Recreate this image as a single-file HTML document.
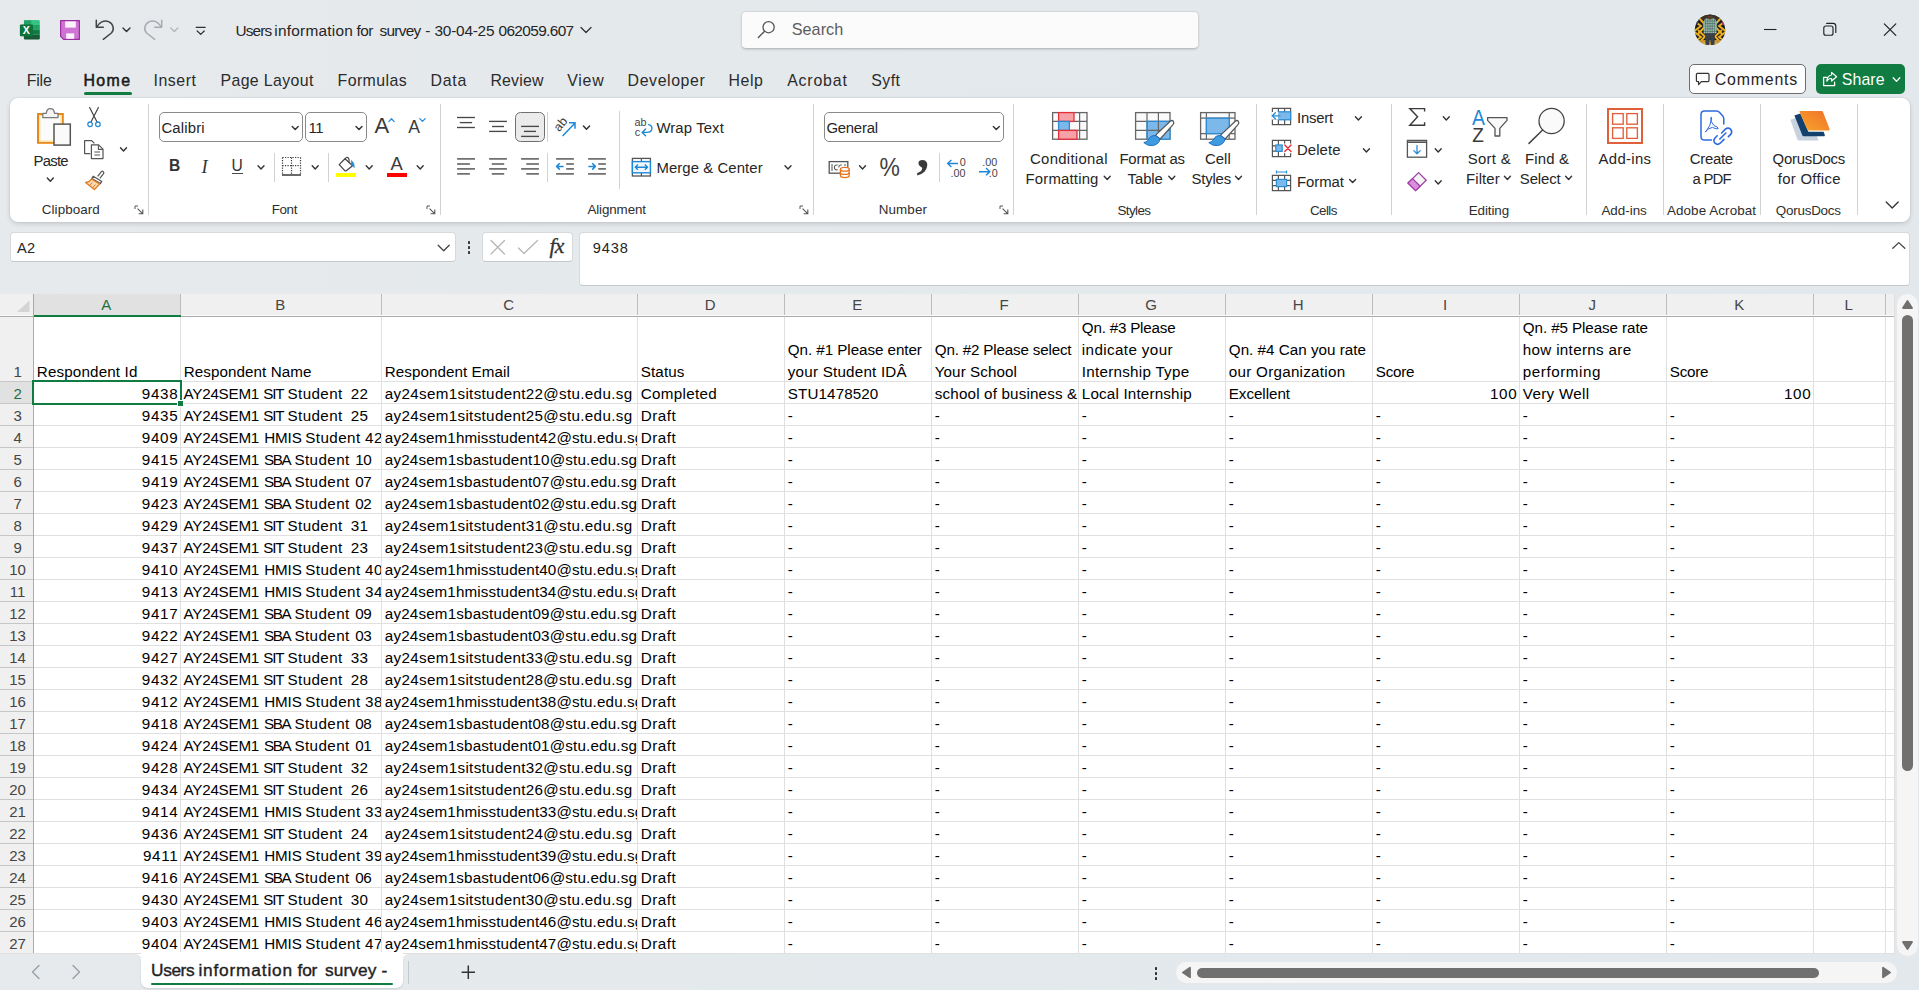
<!DOCTYPE html>
<html lang="en"><head><meta charset="utf-8"><title>Users information for survey - Excel</title>
<style>
html,body{margin:0;padding:0;}
body{width:1919px;height:990px;overflow:hidden;background:#e4e9ec;font-family:"Liberation Sans",sans-serif;position:relative;}
#app{position:absolute;left:0;top:0;width:1919px;height:990px;overflow:hidden;background:linear-gradient(90deg,#e7eaed 0%,#e4e9ec 40%,#e2e8ec 100%);}
.t{position:absolute;white-space:pre;}
.cell{position:absolute;overflow:hidden;white-space:pre;}
</style></head><body><div id="app">
<svg style="position:absolute;left:19px;top:19px;" width="22" height="22" viewBox="0 0 22 22">
<defs><clipPath id="xl"><rect x="4.7" y="1.1" width="16.2" height="19.6" rx="1.4"/></clipPath></defs>
<g clip-path="url(#xl)">
<rect x="4.7" y="1.1" width="8.1" height="4.9" fill="#21a366"/><rect x="12.8" y="1.1" width="8.1" height="4.9" fill="#33c481"/>
<rect x="4.7" y="6" width="8.1" height="4.9" fill="#107c41"/><rect x="12.8" y="6" width="8.1" height="4.9" fill="#21a366"/>
<rect x="4.7" y="10.9" width="8.1" height="4.9" fill="#185c37"/><rect x="12.8" y="10.9" width="8.1" height="4.9" fill="#107c41"/>
<rect x="4.7" y="15.8" width="16.2" height="4.9" fill="#185c37"/>
</g>
<rect x="0.9" y="5.4" width="13.1" height="11.8" rx="1.2" fill="#107c41"/>
<rect x="0.9" y="5.4" width="13.1" height="11.8" rx="1.2" fill="#0b6433" opacity=".35"/>
<text x="7.4" y="15.2" font-family="Liberation Sans, sans-serif" font-weight="bold" font-size="10.6" fill="#fff" text-anchor="middle">X</text>
</svg>
<svg style="position:absolute;left:59px;top:19px;" width="22" height="22" viewBox="0 0 22 22">
<path d="M1.6 1.6 H20.4 V20.4 H4.6 L1.6 17.4 Z" fill="#cf74d4" stroke="#9a2fa0" stroke-width="1.2" stroke-linejoin="round"/>
<rect x="6.2" y="2.4" width="10.6" height="6.2" fill="#fcf2fc"/>
<rect x="7.2" y="14.4" width="8" height="5.4" fill="#fcf2fc"/>
</svg>
<svg style="position:absolute;left:94.2px;top:17.2px;" width="22" height="24" viewBox="0 0 22 24">
<path d="M2.3 3.2 V10.2 H9.3" fill="none" stroke="#444" stroke-width="1.5" stroke-linecap="round" stroke-linejoin="round"/>
<path d="M2.8 9.8 C5 5.5 10 2.6 14.6 4.6 C19.6 6.8 20.6 12.6 17.4 16 L9.3 22.3" fill="none" stroke="#444" stroke-width="1.5" stroke-linecap="round" stroke-linejoin="round"/>
</svg>
<svg style="position:absolute;left:0;top:0;overflow:visible" width="1" height="1"><path d="M123.00 27.90 L126.50 31.50 L130.00 27.90" fill="none" stroke="#333" stroke-width="1.4" stroke-linecap="round" stroke-linejoin="round"/></svg>
<svg style="position:absolute;left:141.8px;top:17.2px;" width="22" height="24" viewBox="0 0 22 24">
<path d="M19.7 3.2 V10.2 H12.7" fill="none" stroke="#a6abaf" stroke-width="1.5" stroke-linecap="round" stroke-linejoin="round"/>
<path d="M19.2 9.8 C17 5.5 12 2.6 7.4 4.6 C2.4 6.8 1.4 12.6 4.6 16 L12.7 22.3" fill="none" stroke="#a6abaf" stroke-width="1.5" stroke-linecap="round" stroke-linejoin="round"/>
</svg>
<svg style="position:absolute;left:0;top:0;overflow:visible" width="1" height="1"><path d="M170.80 27.90 L174.30 31.50 L177.80 27.90" fill="none" stroke="#b4b9bd" stroke-width="1.4" stroke-linecap="round" stroke-linejoin="round"/></svg>
<svg style="position:absolute;left:195px;top:25px;" width="12" height="12" viewBox="0 0 12 12">
<path d="M1.2 2.3 H10.2" stroke="#333" stroke-width="1.3" stroke-linecap="round"/>
<path d="M2.2 6 L5.7 9.4 L9.2 6" fill="none" stroke="#333" stroke-width="1.3" stroke-linecap="round" stroke-linejoin="round"/>
</svg>
<span class="t " style="left:235.60px;top:20px;font-size:15.4px;line-height:22px;color:#262626;letter-spacing:-0.903px;">Users </span>
<span class="t " style="left:274.30px;top:20px;font-size:15.4px;line-height:22px;color:#262626;letter-spacing:0.238px;">information </span>
<span class="t " style="left:356.50px;top:20px;font-size:15.4px;line-height:22px;color:#262626;letter-spacing:-0.524px;">for </span>
<span class="t " style="left:379.60px;top:20px;font-size:15.4px;line-height:22px;color:#262626;letter-spacing:-0.760px;">survey </span>
<span class="t " style="left:425.20px;top:20px;font-size:15.4px;line-height:22px;color:#262626;letter-spacing:0.071px;">- </span>
<span class="t " style="left:434.50px;top:20px;font-size:15.4px;line-height:22px;color:#262626;letter-spacing:-0.231px;">30-04-25 </span>
<span class="t " style="left:498.50px;top:20px;font-size:15.4px;line-height:22px;color:#262626;letter-spacing:-0.626px;">062059.607 </span>
<svg style="position:absolute;left:0;top:0;overflow:visible" width="1" height="1"><path d="M581.00 27.50 L586.00 32.50 L591.00 27.50" fill="none" stroke="#333" stroke-width="1.3" stroke-linecap="round" stroke-linejoin="round"/></svg>
<div style="position:absolute;left:740.5px;top:10.5px;width:458.5px;height:38.5px;background:#fbfbfb;border:1px solid #d3d7da;border-bottom-color:#b9bec2;border-radius:5px;box-sizing:border-box;box-shadow:0 1px 2px rgba(0,0,0,.12);"></div>
<svg style="position:absolute;left:755px;top:18px;" width="24" height="24" viewBox="0 0 24 24">
<circle cx="13.6" cy="9.2" r="5.6" fill="none" stroke="#555" stroke-width="1.3"/>
<path d="M9.6 13.2 L3.4 19.6" stroke="#555" stroke-width="1.4" stroke-linecap="round"/>
</svg>
<span class="t " style="left:791.70px;top:18px;font-size:16.2px;line-height:23px;color:#5d5d5d;letter-spacing:0.061px;">Search </span>
<svg style="position:absolute;left:1694px;top:14px;" width="32" height="32" viewBox="0 0 32 32">
<defs><clipPath id="av"><circle cx="16" cy="15.9" r="15.2"/></clipPath></defs>
<g clip-path="url(#av)">
<rect width="32" height="32" fill="#1d1c22"/>
<rect x="0" y="0" width="32" height="6" fill="#3a3326"/>
<g stroke="#eeb01c" stroke-width="1.9" fill="none">
<path d="M-1 6 L7 12 L-1 18"/><path d="M4 3 L12 11.5 L4 20"/>
<path d="M-1 17 L7 23 L-1 29"/><path d="M4 16 L11 22.5 L4 30"/>
<path d="M33 6 L25 12 L33 18"/><path d="M28 3 L20 11.5 L28 20"/>
<path d="M33 17 L25 23 L33 29"/><path d="M28 16 L21 22.5 L28 30"/>
</g>
<rect x="0" y="1" width="4" height="9" fill="#27408a"/><rect x="28" y="5" width="4" height="6" fill="#a03a5a"/>
<path d="M0 26 L32 26 L32 32 L0 32 Z" fill="#c99634"/>
<path d="M0 28.5 L32 28.5 L32 32 L0 32 Z" fill="#e0ad45"/>
<path d="M10.6 7.2 Q10 5 12 4.4 L20 4.4 Q22 5 21.4 7.2 L22.6 19.5 L9.6 19.5 Z" fill="#a9c1b6"/>
<g stroke="#3f6a60" stroke-width=".7"><path d="M10 7 H22 M10 9.6 H22 M10 12.2 H22.4 M9.8 14.8 H22.4 M9.8 17.4 H22.6 M11.6 4.6 V19.5 M13.8 4.4 V19.5 M16 4.4 V19.5 M18.2 4.4 V19.5 M20.4 4.6 V19.5"/></g>
<path d="M9 8 L10.8 5.4 L11.4 16 L9.4 16.4 Z M23 8 L21.2 5.4 L20.6 16 L22.6 16.4 Z" fill="#8fb0a4"/>
<ellipse cx="16" cy="2.6" rx="2.6" ry="2.9" fill="#5a3d2c"/>
<path d="M13.2 1.6 Q16 -1.6 18.8 1.6 Z" fill="#1f1712"/>
<path d="M11 19.3 H21 L20.4 31 H16.8 L16 23 L15.2 31 H11.6 Z" fill="#3b4048"/>
</g></svg>
<svg style="position:absolute;left:1760px;top:19px;" width="20" height="20" viewBox="0 0 20 20"><path d="M4 10.5 H16.5" stroke="#222" stroke-width="1.1"/></svg>
<svg style="position:absolute;left:1820px;top:19px;" width="20" height="20" viewBox="0 0 20 20"><rect x="3.8" y="7" width="9.2" height="9.2" rx="2" fill="none" stroke="#222" stroke-width="1.15"/>
<path d="M6.6 4.3 H13 Q15.8 4.3 15.8 7.1 V13.4" fill="none" stroke="#222" stroke-width="1.15" stroke-linecap="round"/></svg>
<svg style="position:absolute;left:1880px;top:19px;" width="20" height="20" viewBox="0 0 20 20"><path d="M4.3 4.8 L15.8 16.3 M15.8 4.8 L4.3 16.3" stroke="#222" stroke-width="1.2" stroke-linecap="round"/></svg>
<span class="t " style="left:26.70px;top:70px;font-size:15.9px;line-height:22px;color:#2b2b2b;letter-spacing:-0.180px;">File </span>
<span class="t " style="left:153.50px;top:70px;font-size:15.9px;line-height:22px;color:#2b2b2b;letter-spacing:0.556px;">Insert </span>
<span class="t " style="left:220.50px;top:70px;font-size:15.9px;line-height:22px;color:#2b2b2b;letter-spacing:0.364px;">Page Layout </span>
<span class="t " style="left:337.50px;top:70px;font-size:15.9px;line-height:22px;color:#2b2b2b;letter-spacing:0.429px;">Formulas </span>
<span class="t " style="left:430.50px;top:70px;font-size:15.9px;line-height:22px;color:#2b2b2b;letter-spacing:0.728px;">Data </span>
<span class="t " style="left:490.40px;top:70px;font-size:15.9px;line-height:22px;color:#2b2b2b;letter-spacing:0.178px;">Review </span>
<span class="t " style="left:567.20px;top:70px;font-size:15.9px;line-height:22px;color:#2b2b2b;letter-spacing:0.756px;">View </span>
<span class="t " style="left:627.60px;top:70px;font-size:15.9px;line-height:22px;color:#2b2b2b;letter-spacing:0.591px;">Developer </span>
<span class="t " style="left:728.50px;top:70px;font-size:15.9px;line-height:22px;color:#2b2b2b;letter-spacing:0.550px;">Help </span>
<span class="t " style="left:787.20px;top:70px;font-size:15.9px;line-height:22px;color:#2b2b2b;letter-spacing:0.815px;">Acrobat </span>
<span class="t " style="left:871.20px;top:70px;font-size:15.9px;line-height:22px;color:#2b2b2b;letter-spacing:0.452px;">Syft </span>
<span class="t " style="left:83.50px;top:70px;font-size:15.9px;line-height:22px;color:#1a1a1a;letter-spacing:1.371px;-webkit-text-stroke:0.55px #1a1a1a;">Home </span>
<div style="position:absolute;left:84px;top:92px;width:48px;height:3px;background:#107c41;border-radius:1.5px;"></div>
<div style="position:absolute;left:1689px;top:64px;width:117px;height:30px;background:#fdfdfd;border:1px solid #6e6e6e;border-radius:5px;box-sizing:border-box;"></div>
<svg style="position:absolute;left:1695px;top:71.5px;" width="16" height="14" viewBox="0 0 16 14"><path d="M2.4 1.4 H13 Q14 1.4 14 2.4 V8.6 Q14 9.6 13 9.6 H6.4 L3.6 12.6 V9.6 H2.4 Q1.4 9.6 1.4 8.6 V2.4 Q1.4 1.4 2.4 1.4 Z" fill="none" stroke="#333" stroke-width="1.2" stroke-linejoin="round"/></svg>
<span class="t " style="left:1714.80px;top:69px;font-size:15.9px;line-height:22px;color:#262626;letter-spacing:0.791px;">Comments </span>
<div style="position:absolute;left:1816px;top:64px;width:89px;height:30px;background:#107c41;border-radius:5px;"></div>
<svg style="position:absolute;left:1821.5px;top:70.5px;" width="16" height="16" viewBox="0 0 16 16"><path d="M5.2 6.4 H1.6 V14.6 H12.6 V11.2" fill="none" stroke="#fff" stroke-width="1.3" stroke-linejoin="round" stroke-linecap="round"/>
<path d="M9.6 1.4 L14.6 5.7 L9.6 10 V7.5 C7.2 7.4 5.7 8.4 4.8 10.2 C5 6.8 6.8 4.5 9.6 4 Z" fill="none" stroke="#fff" stroke-width="1.2" stroke-linejoin="round"/></svg>
<span class="t " style="left:1841.80px;top:69px;font-size:15.9px;line-height:22px;color:#ffffff;letter-spacing:0.074px;">Share </span>
<svg style="position:absolute;left:0;top:0;overflow:visible" width="1" height="1"><path d="M1893.20 77.80 L1896.50 81.40 L1899.80 77.80" fill="none" stroke="#fff" stroke-width="1.3" stroke-linecap="round" stroke-linejoin="round"/></svg>
<div style="position:absolute;left:10px;top:232px;width:446px;height:30px;background:#fff;border:1px solid #d6dadd;border-bottom-color:#c4c9cd;border-radius:4px;box-sizing:border-box;"></div>
<span class="t " style="left:17.00px;top:238px;font-size:14.6px;line-height:20px;color:#262626;letter-spacing:0.271px;">A2 </span>
<svg style="position:absolute;left:0;top:0;overflow:visible" width="1" height="1"><path d="M438.20 245.25 L443.70 250.75 L449.20 245.25" fill="none" stroke="#444" stroke-width="1.3" stroke-linecap="round" stroke-linejoin="round"/></svg>
<div style="position:absolute;left:467.7px;top:241.29999999999998px;width:2.6px;height:2.6px;background:#3a3a3a;border-radius:.6px;"></div>
<div style="position:absolute;left:467.7px;top:246.29999999999998px;width:2.6px;height:2.6px;background:#3a3a3a;border-radius:.6px;"></div>
<div style="position:absolute;left:467.7px;top:251.29999999999998px;width:2.6px;height:2.6px;background:#3a3a3a;border-radius:.6px;"></div>
<div style="position:absolute;left:482px;top:232px;width:91px;height:30px;background:#fff;border:1px solid #d6dadd;border-bottom-color:#c4c9cd;border-radius:4px;box-sizing:border-box;"></div>
<svg style="position:absolute;left:488px;top:238px;" width="20" height="18" viewBox="0 0 20 18"><path d="M3 2.5 L16.5 16 M16.5 2.5 L3 16" stroke="#b4b4b4" stroke-width="1.2" stroke-linecap="round"/></svg>
<svg style="position:absolute;left:516px;top:238px;" width="24" height="18" viewBox="0 0 24 18"><path d="M2.5 10 L8 15.5 L21.5 2.5" fill="none" stroke="#b4b4b4" stroke-width="1.2" stroke-linecap="round" stroke-linejoin="round"/></svg>
<span class="t" style="left:549.5px;top:233px;font-family:'Liberation Serif',serif;font-style:italic;font-size:21.5px;line-height:26px;color:#333;letter-spacing:-0.6px;-webkit-text-stroke:0.35px #333;">fx</span>
<div style="position:absolute;left:579px;top:232px;width:1331px;height:54px;background:#fff;border:1px solid #d6dadd;border-bottom-color:#c4c9cd;border-radius:4px;box-sizing:border-box;"></div>
<span class="t " style="left:592.70px;top:238px;font-size:14.6px;line-height:20px;color:#262626;letter-spacing:0.930px;">9438 </span>
<svg style="position:absolute;left:1890px;top:240px;" width="18" height="12" viewBox="0 0 18 12"><path d="M2.8 8.3 L8.8 2.6 L14.8 8.3" fill="none" stroke="#444" stroke-width="1.3" stroke-linecap="round" stroke-linejoin="round"/></svg>
<svg style="position:absolute;left:28px;top:962px;" width="16" height="20" viewBox="0 0 16 20"><path d="M11 3.5 L4.5 10 L11 16.5" fill="none" stroke="#9aa0a5" stroke-width="1.4" stroke-linecap="round" stroke-linejoin="round"/></svg>
<svg style="position:absolute;left:68px;top:962px;" width="16" height="20" viewBox="0 0 16 20"><path d="M5 3.5 L11.5 10 L5 16.5" fill="none" stroke="#9aa0a5" stroke-width="1.4" stroke-linecap="round" stroke-linejoin="round"/></svg>
<div style="position:absolute;left:408px;top:961px;width:1px;height:23px;background:#c4c9cd;"></div>
<svg style="position:absolute;left:460px;top:964px;" width="16" height="16" viewBox="0 0 16 16"><path d="M1.6 8.2 H15 M8.3 1.5 V14.9" stroke="#333" stroke-width="1.5"/></svg>
<div style="position:absolute;left:1154.7px;top:967.3000000000001px;width:2.6px;height:2.6px;background:#333;border-radius:.6px;"></div>
<div style="position:absolute;left:1154.7px;top:972.3000000000001px;width:2.6px;height:2.6px;background:#333;border-radius:.6px;"></div>
<div style="position:absolute;left:1154.7px;top:977.3000000000001px;width:2.6px;height:2.6px;background:#333;border-radius:.6px;"></div>
<div style="position:absolute;left:1176px;top:962px;width:721px;height:21px;background:#f5f5f5;border-radius:10.5px;"></div>
<svg style="position:absolute;left:1180px;top:965px;" width="13" height="15" viewBox="0 0 13 15"><path d="M10 2.8 V12.2 L3 7.5 Z" fill="#707070" stroke="#707070" stroke-width="1.8" stroke-linejoin="round"/></svg>
<svg style="position:absolute;left:1880px;top:965px;" width="13" height="15" viewBox="0 0 13 15"><path d="M3 2.8 V12.2 L10 7.5 Z" fill="#707070" stroke="#707070" stroke-width="1.8" stroke-linejoin="round"/></svg>
<div style="position:absolute;left:1197px;top:967.5px;width:622px;height:10.8px;background:#707070;border-radius:5.4px;"></div>
<div style="position:absolute;left:1897px;top:294px;width:21px;height:662px;background:#f5f5f5;border-radius:10.5px;"></div>
<svg style="position:absolute;left:1900px;top:298px;" width="15" height="13" viewBox="0 0 15 13"><path d="M3 10 H12 L7.5 3 Z" fill="#707070" stroke="#707070" stroke-width="1.8" stroke-linejoin="round"/></svg>
<svg style="position:absolute;left:1900px;top:939px;" width="15" height="13" viewBox="0 0 15 13"><path d="M3 3 H12 L7.5 10 Z" fill="#707070" stroke="#707070" stroke-width="1.8" stroke-linejoin="round"/></svg>
<div style="position:absolute;left:1902px;top:315px;width:11px;height:456px;background:#707070;border-radius:5.5px;"></div>
<div style="position:absolute;left:10px;top:98px;width:1900px;height:124px;background:#fff;border-radius:8px;box-shadow:0 2px 5px rgba(0,0,0,.13),0 0 1.5px rgba(0,0,0,.16);"></div>
<svg style="position:absolute;left:36px;top:107px;" width="36" height="40" viewBox="0 0 36 40">
<rect x="2" y="7" width="24.8" height="28.8" fill="#fbfbfb" stroke="#e8871a" stroke-width="2"/>
<rect x="3.7" y="8.7" width="21.4" height="25.4" fill="none" stroke="#fde6a6" stroke-width="1.4"/>
<path d="M6.8 10.6 V6.4 H10.2 Q10.8 1.6 14.4 1.6 Q18 1.6 18.6 6.4 H22 V10.6 Z" fill="#f4f4f4" stroke="#7a7a7a" stroke-width="1.3" stroke-linejoin="round"/>
<rect x="18" y="17.1" width="16.3" height="21" fill="#fafafa" stroke="#555" stroke-width="1.5"/>
</svg>
<span class="t " style="left:33.60px;top:151px;font-size:14.9px;line-height:21px;color:#262626;letter-spacing:-0.780px;">Paste </span>
<svg style="position:absolute;left:0;top:0;overflow:visible" width="1" height="1"><path d="M47.30 178.00 L50.30 181.20 L53.30 178.00" fill="none" stroke="#333" stroke-width="1.4" stroke-linecap="round" stroke-linejoin="round"/></svg>
<svg style="position:absolute;left:86px;top:106px;" width="16" height="23" viewBox="0 0 16 23">
<path d="M3.6 1.6 L10.9 15.8 M12.4 1.6 L5.1 15.8" fill="none" stroke="#444" stroke-width="1.2" stroke-linecap="round"/>
<circle cx="4.1" cy="18.3" r="2.3" fill="none" stroke="#2a8dd4" stroke-width="1.3"/>
<circle cx="11.9" cy="18.3" r="2.3" fill="none" stroke="#2a8dd4" stroke-width="1.3"/>
</svg>
<svg style="position:absolute;left:83px;top:138.5px;" width="22" height="22" viewBox="0 0 22 22">
<path d="M7.4 14.6 H1.6 V1.6 H8.6 L11.4 4.4" fill="none" stroke="#555" stroke-width="1.2" stroke-linejoin="round"/>
<path d="M8.4 5.8 H15.6 L20 10.2 V19.6 H8.4 Z" fill="#fff" stroke="#555" stroke-width="1.2" stroke-linejoin="round"/>
<path d="M15.4 6 V10.4 H19.8" fill="none" stroke="#555" stroke-width="1.1"/>
<path d="M11.4 13 H17 M11.4 16 H17" stroke="#555" stroke-width="1"/>
</svg>
<svg style="position:absolute;left:0;top:0;overflow:visible" width="1" height="1"><path d="M120.50 147.70 L123.50 150.90 L126.50 147.70" fill="none" stroke="#333" stroke-width="1.4" stroke-linecap="round" stroke-linejoin="round"/></svg>
<svg style="position:absolute;left:83.5px;top:170px;" width="22" height="21" viewBox="0 0 22 21">
<path d="M13.6 6.4 L17.4 1.6 Q18.4 0.8 19.4 1.8 Q20.2 2.8 19.4 3.8 L15.8 8.4" fill="#fff" stroke="#555" stroke-width="1.2" stroke-linejoin="round"/>
<path d="M9.2 6.2 L17.8 11.4 L16.4 13.6 L7.8 8.4 Z" fill="#fff" stroke="#555" stroke-width="1.2" stroke-linejoin="round"/>
<path d="M7.4 9 L15.6 14 L10.4 19.6 L1.6 12.4 Q5.4 12.2 7.4 9 Z" fill="#fbd9b5" stroke="#e07a1a" stroke-width="1.3" stroke-linejoin="round"/>
<path d="M5.6 15.4 L8.2 12.6 M8.6 17.8 L11.4 14.6" stroke="#e07a1a" stroke-width="1"/>
</svg>
<span class="t " style="left:41.80px;top:200px;font-size:13.4px;line-height:19px;color:#2e2e2e;letter-spacing:0.071px;">Clipboard </span>
<svg style="position:absolute;left:134px;top:205px;" width="10" height="10" viewBox="0 0 10 10"><path d="M1 4 V1 H4" fill="none" stroke="#555" stroke-width="1"/><path d="M3.6 3.6 L8.6 8.6 M8.8 4.6 V8.8 H4.6" fill="none" stroke="#555" stroke-width="1.1"/></svg>
<div style="position:absolute;left:148.2px;top:104px;width:1px;height:110.5px;background:#d2d2d2;"></div>
<div style="position:absolute;left:159px;top:112px;width:143.5px;height:30px;background:#fff;border:1px solid #8a8a8a;border-radius:5px;box-sizing:border-box;"></div>
<span class="t " style="left:161.40px;top:118px;font-size:14.9px;line-height:21px;color:#262626;letter-spacing:0.167px;">Calibri </span>
<svg style="position:absolute;left:0;top:0;overflow:visible" width="1" height="1"><path d="M292.20 126.40 L295.20 129.60 L298.20 126.40" fill="none" stroke="#333" stroke-width="1.4" stroke-linecap="round" stroke-linejoin="round"/></svg>
<div style="position:absolute;left:305px;top:112px;width:61.5px;height:30px;background:#fff;border:1px solid #8a8a8a;border-radius:5px;box-sizing:border-box;"></div>
<span class="t " style="left:308.60px;top:118px;font-size:14.9px;line-height:21px;color:#262626;letter-spacing:-0.634px;">11 </span>
<svg style="position:absolute;left:0;top:0;overflow:visible" width="1" height="1"><path d="M356.00 126.40 L359.00 129.60 L362.00 126.40" fill="none" stroke="#333" stroke-width="1.4" stroke-linecap="round" stroke-linejoin="round"/></svg>
<span class="t " style="left:374.40px;top:110px;font-size:22px;line-height:31px;color:#3a3a3a;letter-spacing:0.325px;">A </span>
<svg style="position:absolute;left:386.5px;top:116.8px;" width="9" height="6" viewBox="0 0 9 6"><path d="M1.8 4.6 L4.5 1.8 L7.2 4.6" fill="none" stroke="#2a8dd4" stroke-width="1.3" stroke-linecap="round" stroke-linejoin="round"/></svg>
<span class="t " style="left:408.20px;top:115px;font-size:17.6px;line-height:25px;color:#3a3a3a;letter-spacing:0.860px;">A </span>
<svg style="position:absolute;left:418.4px;top:117.4px;" width="9" height="6" viewBox="0 0 9 6"><path d="M1.8 1.6 L4.5 4.4 L7.2 1.6" fill="none" stroke="#2a8dd4" stroke-width="1.3" stroke-linecap="round" stroke-linejoin="round"/></svg>
<span class="t " style="left:169.00px;top:155px;font-size:15.6px;line-height:22px;color:#333;letter-spacing:-1.266px;font-weight:bold;">B </span>
<span class="t" style="left:201.5px;top:156.5px;font-family:'Liberation Serif',serif;font-style:italic;font-size:18.5px;line-height:20px;color:#333;">I</span>
<span class="t " style="left:231.40px;top:155px;font-size:15.6px;line-height:22px;color:#333;letter-spacing:0.134px;">U </span>
<div style="position:absolute;left:231.8px;top:173.4px;width:11px;height:1px;background:#4a4a4a;"></div>
<svg style="position:absolute;left:0;top:0;overflow:visible" width="1" height="1"><path d="M258.00 165.70 L261.00 168.90 L264.00 165.70" fill="none" stroke="#333" stroke-width="1.4" stroke-linecap="round" stroke-linejoin="round"/></svg>
<div style="position:absolute;left:273.8px;top:152.5px;width:1px;height:29.30000000000001px;background:#d2d2d2;"></div>
<svg style="position:absolute;left:281px;top:156px;" width="21" height="21" viewBox="0 0 21 21">
<path d="M1.5 1.5 H19.5 M1.5 1.5 V18 M19.5 1.5 V18 M10.5 1.5 V18 M1.5 9.6 H19.5" fill="none" stroke="#3c3c3c" stroke-width="1.2" stroke-dasharray="1.2 1.3"/>
<path d="M1 19 H20" stroke="#444" stroke-width="1.6"/>
</svg>
<svg style="position:absolute;left:0;top:0;overflow:visible" width="1" height="1"><path d="M312.20 165.70 L315.20 168.90 L318.20 165.70" fill="none" stroke="#333" stroke-width="1.4" stroke-linecap="round" stroke-linejoin="round"/></svg>
<div style="position:absolute;left:327.8px;top:152.5px;width:1px;height:29.30000000000001px;background:#d2d2d2;"></div>
<svg style="position:absolute;left:336px;top:156px;" width="22" height="16" viewBox="0 0 22 16">
<path d="M3.2 8.6 L9 2.8 L16.6 9.8 L10.2 14.8 Q9.4 15.2 8.8 14.6 Z" fill="#fff" stroke="#444" stroke-width="1.25" stroke-linejoin="round"/>
<path d="M9 2.8 Q10.6 0.6 12.4 2 Q13.4 3 13 6.4" fill="none" stroke="#444" stroke-width="1.2" stroke-linecap="round"/>
<path d="M15.4 4.4 Q18.8 7 18.2 11.6 Q17 9.6 15.4 8.6 Z" fill="#2a8dd4" stroke="#2a8dd4" stroke-width=".7" stroke-linejoin="round"/>
</svg>
<div style="position:absolute;left:335.7px;top:172.5px;width:20px;height:4.6px;background:#ffff00;"></div>
<svg style="position:absolute;left:0;top:0;overflow:visible" width="1" height="1"><path d="M366.20 165.70 L369.20 168.90 L372.20 165.70" fill="none" stroke="#333" stroke-width="1.4" stroke-linecap="round" stroke-linejoin="round"/></svg>
<span class="t " style="left:390.40px;top:151px;font-size:18.4px;line-height:26px;color:#3a3a3a;letter-spacing:1.327px;">A </span>
<div style="position:absolute;left:386.7px;top:172.5px;width:20px;height:4.6px;background:#ff0000;"></div>
<svg style="position:absolute;left:0;top:0;overflow:visible" width="1" height="1"><path d="M417.20 165.70 L420.20 168.90 L423.20 165.70" fill="none" stroke="#333" stroke-width="1.4" stroke-linecap="round" stroke-linejoin="round"/></svg>
<span class="t " style="left:271.80px;top:200px;font-size:13.4px;line-height:19px;color:#2e2e2e;letter-spacing:-0.403px;">Font </span>
<svg style="position:absolute;left:425.7px;top:205px;" width="10" height="10" viewBox="0 0 10 10"><path d="M1 4 V1 H4" fill="none" stroke="#555" stroke-width="1"/><path d="M3.6 3.6 L8.6 8.6 M8.8 4.6 V8.8 H4.6" fill="none" stroke="#555" stroke-width="1.1"/></svg>
<div style="position:absolute;left:440.0px;top:104px;width:1px;height:110.5px;background:#d2d2d2;"></div>
<div style="position:absolute;left:515px;top:112px;width:30px;height:30px;background:#ebebeb;border:1px solid #707070;border-radius:5.5px;box-sizing:border-box;"></div>
<div style="position:absolute;left:547.0px;top:112px;width:1px;height:29.5px;background:#d2d2d2;"></div>
<div style="position:absolute;left:547.0px;top:152.5px;width:1px;height:29.0px;background:#d2d2d2;"></div>
<svg style="position:absolute;left:0;top:0;overflow:visible" width="1" height="1"><path d="M457.00 117.50 H474.90" stroke="#484848" stroke-width="1.35"/><path d="M459.80 122.60 H472.10" stroke="#484848" stroke-width="1.35"/><path d="M457.00 127.50 H474.90" stroke="#484848" stroke-width="1.35"/><path d="M489.10 121.40 H506.90" stroke="#484848" stroke-width="1.35"/><path d="M492.00 126.50 H504.00" stroke="#484848" stroke-width="1.35"/><path d="M489.10 131.40 H506.90" stroke="#484848" stroke-width="1.35"/><path d="M457.10 158.90 H475.00" stroke="#585858" stroke-width="1.5"/><path d="M457.10 164.00 H469.90" stroke="#585858" stroke-width="1.5"/><path d="M457.10 168.90 H475.00" stroke="#585858" stroke-width="1.5"/><path d="M457.10 173.90 H469.90" stroke="#585858" stroke-width="1.5"/><path d="M489.10 158.90 H506.90" stroke="#585858" stroke-width="1.5"/><path d="M491.80 164.00 H504.20" stroke="#585858" stroke-width="1.5"/><path d="M489.10 168.90 H506.90" stroke="#585858" stroke-width="1.5"/><path d="M491.80 173.90 H504.20" stroke="#585858" stroke-width="1.5"/><path d="M521.10 158.90 H538.90" stroke="#585858" stroke-width="1.5"/><path d="M526.30 164.00 H538.90" stroke="#585858" stroke-width="1.5"/><path d="M521.10 168.90 H538.90" stroke="#585858" stroke-width="1.5"/><path d="M526.30 173.90 H538.90" stroke="#585858" stroke-width="1.5"/><path d="M556.10 158.90 H573.90" stroke="#585858" stroke-width="1.5"/><path d="M556.10 173.90 H573.90" stroke="#585858" stroke-width="1.5"/><path d="M566.20 164.00 H573.90" stroke="#585858" stroke-width="1.5"/><path d="M566.20 168.90 H573.90" stroke="#585858" stroke-width="1.5"/><path d="M588.10 158.90 H605.90" stroke="#585858" stroke-width="1.5"/><path d="M588.10 173.90 H605.90" stroke="#585858" stroke-width="1.5"/><path d="M598.20 164.00 H605.90" stroke="#585858" stroke-width="1.5"/><path d="M598.20 168.90 H605.90" stroke="#585858" stroke-width="1.5"/><path d="M563.6 166.4 H556.8 M559.8 163.2 L556.6 166.4 L559.8 169.6" fill="none" stroke="#1e88d8" stroke-width="1.5" stroke-linejoin="round"/><path d="M588.4 166.4 H595.2 M592.2 163.2 L595.4 166.4 L592.2 169.6" fill="none" stroke="#1e88d8" stroke-width="1.5" stroke-linejoin="round"/></svg>
<svg style="position:absolute;left:0;top:0;overflow:visible" width="1" height="1"><path d="M521.10 126.40 H539.00" stroke="#484848" stroke-width="1.35"/><path d="M523.90 131.40 H536.00" stroke="#484848" stroke-width="1.35"/><path d="M521.10 136.40 H539.00" stroke="#484848" stroke-width="1.35"/></svg>
<svg style="position:absolute;left:553px;top:113px;" width="26" height="26" viewBox="0 0 26 26">
<g transform="translate(6.3 19.2) rotate(-51)"><text x="0" y="0" font-family="Liberation Sans, sans-serif" font-size="12.4" fill="#3c3c3c">ab</text></g>
<path d="M9.6 23 L21.6 10.6 M16 9.8 L22 9.8 L22 15.8" fill="none" stroke="#1e88d8" stroke-width="1.5" stroke-linejoin="miter"/>
</svg>
<svg style="position:absolute;left:0;top:0;overflow:visible" width="1" height="1"><path d="M583.40 125.95 L586.50 129.25 L589.60 125.95" fill="none" stroke="#333" stroke-width="1.5" stroke-linecap="round" stroke-linejoin="round"/></svg>
<div style="position:absolute;left:618.8px;top:111px;width:1px;height:77.80000000000001px;background:#d2d2d2;"></div>
<svg style="position:absolute;left:634px;top:116px;" width="20" height="22" viewBox="0 0 20 22">
<text x="0.6" y="9.8" font-family="Liberation Sans, sans-serif" font-size="10.8" fill="#444">ab</text>
<text x="0.8" y="19.6" font-family="Liberation Sans, sans-serif" font-size="10.8" fill="#444">c</text>
<path d="M14.6 8.6 Q18.6 9.6 17.8 13.4 Q17 16.4 13.2 16.4 H8.6 M11.6 13 L8.2 16.4 L11.6 19.8" fill="none" stroke="#1e88d8" stroke-width="1.4" stroke-linecap="round" stroke-linejoin="round"/>
</svg>
<span class="t " style="left:656.40px;top:118px;font-size:14.9px;line-height:21px;color:#262626;letter-spacing:0.119px;">Wrap Text </span>
<svg style="position:absolute;left:631px;top:156.5px;" width="21" height="21" viewBox="0 0 21 21">
<rect x="1.4" y="1.4" width="18" height="17.6" fill="#fff" stroke="#555" stroke-width="1.3"/>
<path d="M10.4 1.4 V4.6 M10.4 15.8 V19" stroke="#555" stroke-width="1.2"/>
<rect x="1.4" y="4.6" width="18" height="11.2" fill="#f2f8fd" stroke="#1e88d8" stroke-width="1.4"/>
<path d="M4.4 10.2 H16.4 M7 7.6 L4.2 10.2 L7 12.8 M13.8 7.6 L16.6 10.2 L13.8 12.8" fill="none" stroke="#1e88d8" stroke-width="1.4" stroke-linejoin="round"/>
</svg>
<span class="t " style="left:656.40px;top:158px;font-size:14.9px;line-height:21px;color:#262626;letter-spacing:0.087px;">Merge &amp; Center </span>
<svg style="position:absolute;left:0;top:0;overflow:visible" width="1" height="1"><path d="M785.00 165.70 L788.00 168.90 L791.00 165.70" fill="none" stroke="#333" stroke-width="1.4" stroke-linecap="round" stroke-linejoin="round"/></svg>
<span class="t " style="left:587.40px;top:200px;font-size:13.4px;line-height:19px;color:#2e2e2e;letter-spacing:-0.110px;">Alignment </span>
<svg style="position:absolute;left:798.7px;top:205px;" width="10" height="10" viewBox="0 0 10 10"><path d="M1 4 V1 H4" fill="none" stroke="#555" stroke-width="1"/><path d="M3.6 3.6 L8.6 8.6 M8.8 4.6 V8.8 H4.6" fill="none" stroke="#555" stroke-width="1.1"/></svg>
<div style="position:absolute;left:812.8px;top:104px;width:1px;height:110.5px;background:#d2d2d2;"></div>
<div style="position:absolute;left:824.3px;top:112px;width:179.5px;height:30px;background:#fff;border:1px solid #8a8a8a;border-radius:5px;box-sizing:border-box;"></div>
<span class="t " style="left:826.40px;top:118px;font-size:14.9px;line-height:21px;color:#262626;letter-spacing:-0.230px;">General </span>
<svg style="position:absolute;left:0;top:0;overflow:visible" width="1" height="1"><path d="M993.30 126.40 L996.30 129.60 L999.30 126.40" fill="none" stroke="#333" stroke-width="1.4" stroke-linecap="round" stroke-linejoin="round"/></svg>
<svg style="position:absolute;left:828px;top:159.5px;" width="23" height="19" viewBox="0 0 23 19">
<rect x="1.2" y="1.6" width="18.6" height="11.6" fill="#fff" stroke="#555" stroke-width="1.3"/>
<path d="M4 4 V11 M17 4 V6" stroke="#555" stroke-width="1"/>
<path d="M9.6 5 Q6.4 4.6 6.4 7.4 Q6.4 10.2 9.6 9.8 M13.8 5 Q10.8 4.6 10.8 7.4" fill="none" stroke="#555" stroke-width="1.1"/>
<path d="M12.4 9.2 V15.6 Q12.4 17.6 16.8 17.6 Q21.2 17.6 21.2 15.6 V9.2" fill="#fff" stroke="#e8711a" stroke-width="1.3"/>
<ellipse cx="16.8" cy="9.2" rx="4.4" ry="1.9" fill="#fff" stroke="#e8711a" stroke-width="1.3"/>
<path d="M12.4 12.4 Q12.4 14.4 16.8 14.4 Q21.2 14.4 21.2 12.4" fill="none" stroke="#e8711a" stroke-width="1.2"/>
</svg>
<svg style="position:absolute;left:0;top:0;overflow:visible" width="1" height="1"><path d="M859.50 165.70 L862.50 168.90 L865.50 165.70" fill="none" stroke="#333" stroke-width="1.4" stroke-linecap="round" stroke-linejoin="round"/></svg>
<svg style="position:absolute;left:0;top:0;overflow:visible" width="1" height="1"><text x="879.5" y="176.2" font-family="Liberation Sans, sans-serif" font-size="25.4" fill="#3f3f3f" textLength="20.4" lengthAdjust="spacingAndGlyphs">%</text><text x="916.4" y="167.3" font-family="Liberation Serif, serif" font-weight="bold" font-size="51" fill="#3a3a3a">,</text></svg>
<div style="position:absolute;left:938.8px;top:152.5px;width:1px;height:29.30000000000001px;background:#d2d2d2;"></div>
<svg style="position:absolute;left:946px;top:155.5px;" width="22" height="22" viewBox="0 0 22 22">
<path d="M12 7.5 H1.8 M5.4 3.9 L1.6 7.5 L5.4 11.1" fill="none" stroke="#1e88d8" stroke-width="1.4" stroke-linejoin="round"/>
<text x="13.7" y="9.7" font-family="Liberation Sans, sans-serif" font-size="10.8" fill="#444">0</text>
<text x="4.4" y="20.6" font-family="Liberation Sans, sans-serif" font-size="10.8" fill="#444">.00</text></svg>
<svg style="position:absolute;left:978px;top:155.5px;" width="22" height="22" viewBox="0 0 22 22">
<text x="4.2" y="9.7" font-family="Liberation Sans, sans-serif" font-size="10.8" fill="#444">.00</text>
<path d="M1 15.7 H11.6 M8 12.1 L11.8 15.7 L8 19.3" fill="none" stroke="#1e88d8" stroke-width="1.4" stroke-linejoin="round"/>
<text x="10.8" y="20.6" font-family="Liberation Sans, sans-serif" font-size="10.8" fill="#444">.0</text></svg>
<span class="t " style="left:878.80px;top:200px;font-size:13.4px;line-height:19px;color:#2e2e2e;letter-spacing:0.090px;">Number </span>
<svg style="position:absolute;left:998.8px;top:205px;" width="10" height="10" viewBox="0 0 10 10"><path d="M1 4 V1 H4" fill="none" stroke="#555" stroke-width="1"/><path d="M3.6 3.6 L8.6 8.6 M8.8 4.6 V8.8 H4.6" fill="none" stroke="#555" stroke-width="1.1"/></svg>
<div style="position:absolute;left:1012.8px;top:104px;width:1px;height:110.5px;background:#d2d2d2;"></div>
<svg style="position:absolute;left:1051px;top:111px;" width="38" height="30" viewBox="0 0 38 30">
<rect x="1.6" y="1.6" width="34.4" height="26.6" fill="#fafafa" stroke="#666" stroke-width="1.3"/>
<path d="M1.6 10.4 H36 M1.6 19.4 H36 M7.6 1.6 V28.2 M18.4 1.6 V28.2 M28.6 1.6 V28.2" stroke="#666" stroke-width="1.2"/>
<rect x="7.6" y="1.6" width="15.4" height="8.8" fill="#f8a0a8" stroke="#e0303a" stroke-width="1.3"/>
<rect x="7.6" y="10.4" width="10.8" height="9" fill="#7cb8ea" stroke="#2a8dd4" stroke-width="1.3"/>
<rect x="7.6" y="19.4" width="18.4" height="8.8" fill="#f8a0a8" stroke="#e0303a" stroke-width="1.3"/>
</svg>
<span class="t " style="left:1030.00px;top:149px;font-size:14.9px;line-height:21px;color:#262626;letter-spacing:0.295px;">Conditional </span>
<span class="t " style="left:1025.60px;top:169px;font-size:14.9px;line-height:21px;color:#262626;letter-spacing:0.179px;">Formatting </span>
<svg style="position:absolute;left:0;top:0;overflow:visible" width="1" height="1"><path d="M1104.20 176.30 L1107.20 179.50 L1110.20 176.30" fill="none" stroke="#333" stroke-width="1.4" stroke-linecap="round" stroke-linejoin="round"/></svg>
<svg style="position:absolute;left:1134px;top:111px;" width="42" height="37" viewBox="0 0 42 37">
<rect x="1.6" y="1.6" width="34.4" height="26.6" fill="#fafafa" stroke="#666" stroke-width="1.3"/>
<rect x="13" y="10.4" width="23" height="17.8" fill="#7cb8ea"/>
<path d="M1.6 10.4 H36 M1.6 19.4 H36 M13 1.6 V28.2 M24.4 1.6 V28.2" stroke="#666" stroke-width="1.2"/>
<path d="M13 10.4 H36 V28.2 H13 Z" fill="none" stroke="#2a8dd4" stroke-width="1.2"/>
<g>
<path d="M21.4 24.4 L36.2 10.2 Q38 8.8 39.3 10.2 Q40.4 11.8 39 13.6 L26.2 28 Z" fill="#fff" stroke="#555" stroke-width="1.2" stroke-linejoin="round"/>
<path d="M21.6 24.6 Q16.6 24.2 15 28 Q13.4 31.2 9.8 31.6 Q13.2 35 18.6 34.6 Q25.2 33.4 26 27.8 Z" fill="#3f9be0" stroke="#1a6fc0" stroke-width="1" stroke-linejoin="round"/>
</g></svg>
<span class="t " style="left:1119.40px;top:149px;font-size:14.9px;line-height:21px;color:#262626;letter-spacing:-0.185px;">Format as </span>
<span class="t " style="left:1127.60px;top:169px;font-size:14.9px;line-height:21px;color:#262626;letter-spacing:-0.084px;">Table </span>
<svg style="position:absolute;left:0;top:0;overflow:visible" width="1" height="1"><path d="M1168.80 176.30 L1171.80 179.50 L1174.80 176.30" fill="none" stroke="#333" stroke-width="1.4" stroke-linecap="round" stroke-linejoin="round"/></svg>
<svg style="position:absolute;left:1199px;top:111px;" width="42" height="37" viewBox="0 0 42 37">
<rect x="1.6" y="1.6" width="34.4" height="26.6" fill="#fafafa" stroke="#666" stroke-width="1.3"/>
<path d="M1.6 7.2 H36 M1.6 22.6 H36 M7.4 1.6 V28.2 M30.2 1.6 V28.2" stroke="#666" stroke-width="1.2"/>
<rect x="7.4" y="7.2" width="22.8" height="15.4" fill="#7cb8ea" stroke="#2a8dd4" stroke-width="1.3"/>
<g>
<path d="M21.4 24.4 L36.2 10.2 Q38 8.8 39.3 10.2 Q40.4 11.8 39 13.6 L26.2 28 Z" fill="#fff" stroke="#555" stroke-width="1.2" stroke-linejoin="round"/>
<path d="M21.6 24.6 Q16.6 24.2 15 28 Q13.4 31.2 9.8 31.6 Q13.2 35 18.6 34.6 Q25.2 33.4 26 27.8 Z" fill="#3f9be0" stroke="#1a6fc0" stroke-width="1" stroke-linejoin="round"/>
</g></svg>
<span class="t " style="left:1205.00px;top:149px;font-size:14.9px;line-height:21px;color:#262626;letter-spacing:0.033px;">Cell </span>
<span class="t " style="left:1191.40px;top:169px;font-size:14.9px;line-height:21px;color:#262626;letter-spacing:-0.163px;">Styles </span>
<svg style="position:absolute;left:0;top:0;overflow:visible" width="1" height="1"><path d="M1235.50 176.30 L1238.50 179.50 L1241.50 176.30" fill="none" stroke="#333" stroke-width="1.4" stroke-linecap="round" stroke-linejoin="round"/></svg>
<span class="t " style="left:1117.40px;top:201px;font-size:13.4px;line-height:19px;color:#2e2e2e;letter-spacing:-0.582px;">Styles </span>
<div style="position:absolute;left:1255.8px;top:104px;width:1px;height:110.5px;background:#d2d2d2;"></div>
<svg style="position:absolute;left:1271px;top:106.5px;" width="22" height="20" viewBox="0 0 22 20"><path d="M1.4 1.4 H19.6 V17.6 H1.4 Z M1.4 6.8 H19.6 M1.4 12.2 H19.6 M7.4 1.4 V17.6 M13.6 1.4 V17.6" fill="none" stroke="#555" stroke-width="1.2"/>
<rect x="7.4" y="4.8" width="12.2" height="8" fill="#7cb8ea" stroke="#2a8dd4" stroke-width="1.2"/>
<rect x="0.4" y="5" width="7" height="7.6" fill="#fff"/>
<path d="M9 8.8 H1.4 M4.4 5.8 L1.2 8.8 L4.4 11.8" fill="none" stroke="#2a8dd4" stroke-width="1.3" stroke-linecap="round" stroke-linejoin="round"/></svg>
<span class="t " style="left:1297.00px;top:108px;font-size:14.9px;line-height:21px;color:#262626;letter-spacing:-0.244px;">Insert </span>
<svg style="position:absolute;left:0;top:0;overflow:visible" width="1" height="1"><path d="M1355.40 116.80 L1358.40 120.00 L1361.40 116.80" fill="none" stroke="#333" stroke-width="1.4" stroke-linecap="round" stroke-linejoin="round"/></svg>
<svg style="position:absolute;left:1271px;top:139px;" width="22" height="20" viewBox="0 0 22 20"><path d="M1.4 1.4 H19.6 V17.6 H1.4 Z M1.4 6.8 H19.6 M1.4 12.2 H19.6 M7.4 1.4 V17.6 M13.6 1.4 V17.6" fill="none" stroke="#555" stroke-width="1.2"/>
<rect x="11" y="4.6" width="10.6" height="9.6" fill="#fff"/>
<rect x="4.8" y="6" width="6.4" height="6.4" fill="#7cb8ea" stroke="#2a8dd4" stroke-width="1.2"/>
<path d="M13.8 6 L20 12.4 M20 6 L13.8 12.4" stroke="#e8303a" stroke-width="1.4" stroke-linecap="round"/></svg>
<span class="t " style="left:1297.00px;top:140px;font-size:14.9px;line-height:21px;color:#262626;letter-spacing:0.088px;">Delete </span>
<svg style="position:absolute;left:0;top:0;overflow:visible" width="1" height="1"><path d="M1363.40 148.80 L1366.40 152.00 L1369.40 148.80" fill="none" stroke="#333" stroke-width="1.4" stroke-linecap="round" stroke-linejoin="round"/></svg>
<svg style="position:absolute;left:1271px;top:170px;" width="22" height="22" viewBox="0 0 22 22">
<path d="M1.4 5.4 H19.6 V20.6 H1.4 Z M1.4 10.4 H19.6 M1.4 15.6 H19.6 M7.4 5.4 V20.6 M13.6 5.4 V20.6" fill="none" stroke="#555" stroke-width="1.2"/>
<rect x="5.4" y="9.4" width="10.2" height="7.2" fill="#7cb8ea" stroke="#2a8dd4" stroke-width="1.2"/>
<path d="M5.4 2 H15.6 M5.4 0.4 V3.6 M15.6 0.4 V3.6" stroke="#2a8dd4" stroke-width="1.1"/>
</svg>
<span class="t " style="left:1297.00px;top:172px;font-size:14.9px;line-height:21px;color:#262626;letter-spacing:-0.065px;">Format </span>
<svg style="position:absolute;left:0;top:0;overflow:visible" width="1" height="1"><path d="M1349.60 179.40 L1352.60 182.60 L1355.60 179.40" fill="none" stroke="#333" stroke-width="1.4" stroke-linecap="round" stroke-linejoin="round"/></svg>
<span class="t " style="left:1310.00px;top:201px;font-size:13.4px;line-height:19px;color:#2e2e2e;letter-spacing:-0.597px;">Cells </span>
<div style="position:absolute;left:1391.1px;top:104px;width:1px;height:110.5px;background:#d2d2d2;"></div>
<svg style="position:absolute;left:1408px;top:107px;" width="19" height="20" viewBox="0 0 19 20"><path d="M16.6 4.6 V1.6 H1.8 L9.6 9.8 L1.8 18.2 H16.6 V15.2" fill="none" stroke="#3a3a3a" stroke-width="1.4" stroke-linejoin="miter"/></svg>
<svg style="position:absolute;left:0;top:0;overflow:visible" width="1" height="1"><path d="M1443.30 116.80 L1446.30 120.00 L1449.30 116.80" fill="none" stroke="#333" stroke-width="1.4" stroke-linecap="round" stroke-linejoin="round"/></svg>
<svg style="position:absolute;left:1406px;top:139px;" width="22" height="20" viewBox="0 0 22 20">
<rect x="1.4" y="1.4" width="19.2" height="16.8" fill="#fff" stroke="#555" stroke-width="1.3"/>
<path d="M1.4 3.2 H20.6" stroke="#555" stroke-width="1.6"/>
<path d="M11 6.4 V14.6 M7.8 11.6 L11 14.8 L14.2 11.6" fill="none" stroke="#2a8dd4" stroke-width="1.3" stroke-linecap="round" stroke-linejoin="round"/>
</svg>
<svg style="position:absolute;left:0;top:0;overflow:visible" width="1" height="1"><path d="M1435.20 148.80 L1438.20 152.00 L1441.20 148.80" fill="none" stroke="#333" stroke-width="1.4" stroke-linecap="round" stroke-linejoin="round"/></svg>
<svg style="position:absolute;left:1406px;top:170.5px;" width="22" height="21" viewBox="0 0 22 21">
<path d="M12.6 1.6 L20.2 9.2 L9.6 19.6 L2 12 Z" fill="#f4f4f4" stroke="#a03fa8" stroke-width="1.3" stroke-linejoin="round"/>
<path d="M6.6 7.6 L14.2 15.2 L9.6 19.6 L2 12 Z" fill="#d98fdd" stroke="#a03fa8" stroke-width="1.3" stroke-linejoin="round"/>
</svg>
<svg style="position:absolute;left:0;top:0;overflow:visible" width="1" height="1"><path d="M1435.20 180.80 L1438.20 184.00 L1441.20 180.80" fill="none" stroke="#333" stroke-width="1.4" stroke-linecap="round" stroke-linejoin="round"/></svg>
<svg style="position:absolute;left:1471px;top:108px;" width="38" height="36" viewBox="0 0 38 36">
<text x="1.1" y="16.5" font-family="Liberation Sans, sans-serif" font-size="21.4" fill="#1e88d8" textLength="13" lengthAdjust="spacingAndGlyphs">A</text>
<text x="1.3" y="34.2" font-family="Liberation Sans, sans-serif" font-size="20.8" fill="#3a3a3a" textLength="11.6" lengthAdjust="spacingAndGlyphs">Z</text>
<path d="M16.6 9.6 H36 V12.4 L28.8 20.4 V28 H24 V20.4 L16.6 12.4 Z" fill="#fafafa" stroke="#555" stroke-width="1.3" stroke-linejoin="round"/>
</svg>
<span class="t " style="left:1467.80px;top:149px;font-size:14.9px;line-height:21px;color:#262626;letter-spacing:0.299px;">Sort &amp; </span>
<span class="t " style="left:1466.00px;top:169px;font-size:14.9px;line-height:21px;color:#262626;letter-spacing:0.115px;">Filter </span>
<svg style="position:absolute;left:0;top:0;overflow:visible" width="1" height="1"><path d="M1504.40 176.30 L1507.40 179.50 L1510.40 176.30" fill="none" stroke="#333" stroke-width="1.4" stroke-linecap="round" stroke-linejoin="round"/></svg>
<svg style="position:absolute;left:1527px;top:107px;" width="39" height="39" viewBox="0 0 39 39">
<circle cx="24.6" cy="14" r="12.6" fill="#fafafa" stroke="#444" stroke-width="1.3"/>
<path d="M15.6 23 L2 36.4" stroke="#444" stroke-width="1.5" stroke-linecap="round"/>
</svg>
<span class="t " style="left:1525.00px;top:149px;font-size:14.9px;line-height:21px;color:#262626;letter-spacing:0.156px;">Find &amp; </span>
<span class="t " style="left:1519.80px;top:169px;font-size:14.9px;line-height:21px;color:#262626;letter-spacing:-0.102px;">Select </span>
<svg style="position:absolute;left:0;top:0;overflow:visible" width="1" height="1"><path d="M1565.60 176.30 L1568.60 179.50 L1571.60 176.30" fill="none" stroke="#333" stroke-width="1.4" stroke-linecap="round" stroke-linejoin="round"/></svg>
<span class="t " style="left:1468.80px;top:201px;font-size:13.4px;line-height:19px;color:#2e2e2e;letter-spacing:-0.111px;">Editing </span>
<div style="position:absolute;left:1586.1px;top:104px;width:1px;height:110.5px;background:#d2d2d2;"></div>
<svg style="position:absolute;left:1606px;top:107px;" width="38" height="38" viewBox="0 0 38 38">
<rect x="2" y="2" width="34" height="34" fill="none" stroke="#e0603a" stroke-width="2"/>
<rect x="6.6" y="6.6" width="10.6" height="10.6" fill="none" stroke="#e0603a" stroke-width="1.35"/>
<rect x="20.8" y="6.6" width="10.6" height="10.6" fill="none" stroke="#e0603a" stroke-width="1.35"/>
<rect x="6.6" y="20.8" width="10.6" height="10.6" fill="none" stroke="#e0603a" stroke-width="1.35"/>
<rect x="20.8" y="20.8" width="10.6" height="10.6" fill="none" stroke="#e0603a" stroke-width="1.35"/>
</svg>
<span class="t " style="left:1598.60px;top:149px;font-size:14.9px;line-height:21px;color:#262626;letter-spacing:0.325px;">Add-ins </span>
<span class="t " style="left:1601.40px;top:201px;font-size:13.4px;line-height:19px;color:#2e2e2e;letter-spacing:-0.005px;">Add-ins </span>
<div style="position:absolute;left:1663.0px;top:104px;width:1px;height:110.5px;background:#d2d2d2;"></div>
<svg style="position:absolute;left:1699px;top:109px;" width="36" height="39" viewBox="0 0 36 39">
<path d="M12.4 31 H5.6 Q2 31 2 27.4 V5.6 Q2 2 5.6 2 H17.4 Q19.4 2 20.6 3.4 L23.6 6.8 Q24.8 8.2 24.8 10 V15" fill="none" stroke="#2d6be0" stroke-width="1.5" stroke-linecap="round"/>
<path d="M7 22.2 Q11.4 17.4 12.6 10.2 Q12.8 7.4 11.8 8.4 Q10.6 12 15 16.6 Q19.4 18 19.2 19.6 Q18 20.6 13.4 18.4 Q8.6 19.6 7 22.2 Q5.6 24 7 22.2" fill="none" stroke="#2d6be0" stroke-width="1"/>
<g fill="none" stroke="#2d6be0" stroke-width="1.6" stroke-linecap="round">
<path d="M22.6 24 L26.4 20.2 Q29 18 31.6 20.2 Q33.8 22.8 31.6 25.4 L29.4 27.6"/>
<path d="M25 30.4 L21.2 34.2 Q18.6 36.4 16 34.2 Q13.8 31.6 16 29 L18.2 26.8"/>
<path d="M20.8 30 L26.8 24"/>
</g>
</svg>
<span class="t " style="left:1689.80px;top:149px;font-size:14.9px;line-height:21px;color:#262626;letter-spacing:-0.287px;">Create </span>
<span class="t " style="left:1692.60px;top:169px;font-size:14.9px;line-height:21px;color:#262626;letter-spacing:-0.806px;">a PDF </span>
<span class="t " style="left:1667.00px;top:201px;font-size:13.4px;line-height:19px;color:#2e2e2e;letter-spacing:0.099px;">Adobe Acrobat </span>
<div style="position:absolute;left:1760.1px;top:104px;width:1px;height:110.5px;background:#d2d2d2;"></div>
<svg style="position:absolute;left:1788px;top:109px;" width="44" height="34" viewBox="0 0 44 34">
<defs><linearGradient id="qg" x1="0" y1="1" x2="1" y2="0"><stop offset="0" stop-color="#f8a72a"/><stop offset="1" stop-color="#f0702a"/></linearGradient></defs>
<path d="M2.4 10.8 L9.4 30.6 Q9.8 31.4 10.8 31.4 H30.6 L28.4 26 H16 L9 8.6 Z" fill="#c8d2de"/>
<path d="M6.4 6.6 L14.4 26.4 Q14.8 27.2 15.8 27.2 H36 Q37.2 27.2 36.8 26 L35.6 22.8 H20.4 L12.4 4.6 Z" fill="#14406e"/>
<path d="M11.6 3 Q11.2 2 12.4 2 H33.6 Q34.6 2 35 3 L41.6 20 Q42 21.4 40.6 21.4 H20.6 Q19.6 21.4 19.2 20.4 Z" fill="url(#qg)"/>
</svg>
<span class="t " style="left:1772.60px;top:149px;font-size:14.9px;line-height:21px;color:#262626;letter-spacing:-0.236px;">QorusDocs </span>
<span class="t " style="left:1777.80px;top:169px;font-size:14.9px;line-height:21px;color:#262626;letter-spacing:0.282px;">for Office </span>
<span class="t " style="left:1775.80px;top:201px;font-size:13.4px;line-height:19px;color:#2e2e2e;letter-spacing:-0.225px;">QorusDocs </span>
<div style="position:absolute;left:1857.0px;top:104px;width:1px;height:110.5px;background:#d2d2d2;"></div>
<svg style="position:absolute;left:1884px;top:199px;" width="16" height="12" viewBox="0 0 16 12"><path d="M2.2 3 L8.2 9 L14.2 3" fill="none" stroke="#333" stroke-width="1.3" stroke-linecap="round" stroke-linejoin="round"/></svg>
<div style="position:absolute;left:0px;top:294px;width:1895px;height:660px;background:#e0e0e0;"></div>
<div style="position:absolute;left:0px;top:294px;width:1894px;height:659px;background:#fff;overflow:hidden;"></div>
<div style="position:absolute;left:0px;top:294px;width:1894px;height:23px;background:#f0f0f0;"></div>
<div style="position:absolute;left:0px;top:294px;width:33px;height:659px;background:#f0f0f0;"></div>
<div style="position:absolute;left:34px;top:294px;width:146px;height:21px;background:#e1e1e1;"></div>
<div style="position:absolute;left:0px;top:382px;width:33px;height:21px;background:#e1e1e1;"></div>
<div style="position:absolute;left:180px;top:317px;width:1px;height:636px;background:#e0e0e0;"></div>
<div style="position:absolute;left:180px;top:294px;width:1px;height:22px;background:#bcbcbc;"></div>
<div style="position:absolute;left:381px;top:317px;width:1px;height:636px;background:#e0e0e0;"></div>
<div style="position:absolute;left:381px;top:294px;width:1px;height:22px;background:#bcbcbc;"></div>
<div style="position:absolute;left:637px;top:317px;width:1px;height:636px;background:#e0e0e0;"></div>
<div style="position:absolute;left:637px;top:294px;width:1px;height:22px;background:#bcbcbc;"></div>
<div style="position:absolute;left:784px;top:317px;width:1px;height:636px;background:#e0e0e0;"></div>
<div style="position:absolute;left:784px;top:294px;width:1px;height:22px;background:#bcbcbc;"></div>
<div style="position:absolute;left:931px;top:317px;width:1px;height:636px;background:#e0e0e0;"></div>
<div style="position:absolute;left:931px;top:294px;width:1px;height:22px;background:#bcbcbc;"></div>
<div style="position:absolute;left:1078px;top:317px;width:1px;height:636px;background:#e0e0e0;"></div>
<div style="position:absolute;left:1078px;top:294px;width:1px;height:22px;background:#bcbcbc;"></div>
<div style="position:absolute;left:1225px;top:317px;width:1px;height:636px;background:#e0e0e0;"></div>
<div style="position:absolute;left:1225px;top:294px;width:1px;height:22px;background:#bcbcbc;"></div>
<div style="position:absolute;left:1372px;top:317px;width:1px;height:636px;background:#e0e0e0;"></div>
<div style="position:absolute;left:1372px;top:294px;width:1px;height:22px;background:#bcbcbc;"></div>
<div style="position:absolute;left:1519px;top:317px;width:1px;height:636px;background:#e0e0e0;"></div>
<div style="position:absolute;left:1519px;top:294px;width:1px;height:22px;background:#bcbcbc;"></div>
<div style="position:absolute;left:1666px;top:317px;width:1px;height:636px;background:#e0e0e0;"></div>
<div style="position:absolute;left:1666px;top:294px;width:1px;height:22px;background:#bcbcbc;"></div>
<div style="position:absolute;left:1813px;top:317px;width:1px;height:636px;background:#e0e0e0;"></div>
<div style="position:absolute;left:1813px;top:294px;width:1px;height:22px;background:#bcbcbc;"></div>
<div style="position:absolute;left:1885px;top:317px;width:1px;height:636px;background:#e0e0e0;"></div>
<div style="position:absolute;left:1885px;top:294px;width:1px;height:22px;background:#bcbcbc;"></div>
<div style="position:absolute;left:34px;top:381px;width:1860px;height:1px;background:#e0e0e0;"></div>
<div style="position:absolute;left:0px;top:381px;width:33px;height:1px;background:#c6c6c6;"></div>
<div style="position:absolute;left:34px;top:403px;width:1860px;height:1px;background:#e0e0e0;"></div>
<div style="position:absolute;left:0px;top:403px;width:33px;height:1px;background:#c6c6c6;"></div>
<div style="position:absolute;left:34px;top:425px;width:1860px;height:1px;background:#e0e0e0;"></div>
<div style="position:absolute;left:0px;top:425px;width:33px;height:1px;background:#c6c6c6;"></div>
<div style="position:absolute;left:34px;top:447px;width:1860px;height:1px;background:#e0e0e0;"></div>
<div style="position:absolute;left:0px;top:447px;width:33px;height:1px;background:#c6c6c6;"></div>
<div style="position:absolute;left:34px;top:469px;width:1860px;height:1px;background:#e0e0e0;"></div>
<div style="position:absolute;left:0px;top:469px;width:33px;height:1px;background:#c6c6c6;"></div>
<div style="position:absolute;left:34px;top:491px;width:1860px;height:1px;background:#e0e0e0;"></div>
<div style="position:absolute;left:0px;top:491px;width:33px;height:1px;background:#c6c6c6;"></div>
<div style="position:absolute;left:34px;top:513px;width:1860px;height:1px;background:#e0e0e0;"></div>
<div style="position:absolute;left:0px;top:513px;width:33px;height:1px;background:#c6c6c6;"></div>
<div style="position:absolute;left:34px;top:535px;width:1860px;height:1px;background:#e0e0e0;"></div>
<div style="position:absolute;left:0px;top:535px;width:33px;height:1px;background:#c6c6c6;"></div>
<div style="position:absolute;left:34px;top:557px;width:1860px;height:1px;background:#e0e0e0;"></div>
<div style="position:absolute;left:0px;top:557px;width:33px;height:1px;background:#c6c6c6;"></div>
<div style="position:absolute;left:34px;top:579px;width:1860px;height:1px;background:#e0e0e0;"></div>
<div style="position:absolute;left:0px;top:579px;width:33px;height:1px;background:#c6c6c6;"></div>
<div style="position:absolute;left:34px;top:601px;width:1860px;height:1px;background:#e0e0e0;"></div>
<div style="position:absolute;left:0px;top:601px;width:33px;height:1px;background:#c6c6c6;"></div>
<div style="position:absolute;left:34px;top:623px;width:1860px;height:1px;background:#e0e0e0;"></div>
<div style="position:absolute;left:0px;top:623px;width:33px;height:1px;background:#c6c6c6;"></div>
<div style="position:absolute;left:34px;top:645px;width:1860px;height:1px;background:#e0e0e0;"></div>
<div style="position:absolute;left:0px;top:645px;width:33px;height:1px;background:#c6c6c6;"></div>
<div style="position:absolute;left:34px;top:667px;width:1860px;height:1px;background:#e0e0e0;"></div>
<div style="position:absolute;left:0px;top:667px;width:33px;height:1px;background:#c6c6c6;"></div>
<div style="position:absolute;left:34px;top:689px;width:1860px;height:1px;background:#e0e0e0;"></div>
<div style="position:absolute;left:0px;top:689px;width:33px;height:1px;background:#c6c6c6;"></div>
<div style="position:absolute;left:34px;top:711px;width:1860px;height:1px;background:#e0e0e0;"></div>
<div style="position:absolute;left:0px;top:711px;width:33px;height:1px;background:#c6c6c6;"></div>
<div style="position:absolute;left:34px;top:733px;width:1860px;height:1px;background:#e0e0e0;"></div>
<div style="position:absolute;left:0px;top:733px;width:33px;height:1px;background:#c6c6c6;"></div>
<div style="position:absolute;left:34px;top:755px;width:1860px;height:1px;background:#e0e0e0;"></div>
<div style="position:absolute;left:0px;top:755px;width:33px;height:1px;background:#c6c6c6;"></div>
<div style="position:absolute;left:34px;top:777px;width:1860px;height:1px;background:#e0e0e0;"></div>
<div style="position:absolute;left:0px;top:777px;width:33px;height:1px;background:#c6c6c6;"></div>
<div style="position:absolute;left:34px;top:799px;width:1860px;height:1px;background:#e0e0e0;"></div>
<div style="position:absolute;left:0px;top:799px;width:33px;height:1px;background:#c6c6c6;"></div>
<div style="position:absolute;left:34px;top:821px;width:1860px;height:1px;background:#e0e0e0;"></div>
<div style="position:absolute;left:0px;top:821px;width:33px;height:1px;background:#c6c6c6;"></div>
<div style="position:absolute;left:34px;top:843px;width:1860px;height:1px;background:#e0e0e0;"></div>
<div style="position:absolute;left:0px;top:843px;width:33px;height:1px;background:#c6c6c6;"></div>
<div style="position:absolute;left:34px;top:865px;width:1860px;height:1px;background:#e0e0e0;"></div>
<div style="position:absolute;left:0px;top:865px;width:33px;height:1px;background:#c6c6c6;"></div>
<div style="position:absolute;left:34px;top:887px;width:1860px;height:1px;background:#e0e0e0;"></div>
<div style="position:absolute;left:0px;top:887px;width:33px;height:1px;background:#c6c6c6;"></div>
<div style="position:absolute;left:34px;top:909px;width:1860px;height:1px;background:#e0e0e0;"></div>
<div style="position:absolute;left:0px;top:909px;width:33px;height:1px;background:#c6c6c6;"></div>
<div style="position:absolute;left:34px;top:931px;width:1860px;height:1px;background:#e0e0e0;"></div>
<div style="position:absolute;left:0px;top:931px;width:33px;height:1px;background:#c6c6c6;"></div>
<div style="position:absolute;left:0px;top:315px;width:1894px;height:1px;background:#fafafa;"></div>
<div style="position:absolute;left:0px;top:316px;width:1894px;height:1px;background:#ababab;"></div>
<div style="position:absolute;left:33px;top:294px;width:1px;height:659px;background:#ababab;"></div>
<div style="position:absolute;left:34px;top:315px;width:147px;height:2px;background:#107c41;"></div>
<svg style="position:absolute;left:15px;top:299px;" width="18" height="16" viewBox="0 0 18 16"><path d="M14.5 1.5 V13 H2 Z" fill="#d4d4d4"/></svg>
<span class="t " style="left:101.20px;top:294px;font-size:15px;line-height:21px;color:#1e6e42;">A </span>
<span class="t " style="left:275.20px;top:294px;font-size:15px;line-height:21px;color:#454545;">B </span>
<span class="t " style="left:503.28px;top:294px;font-size:15px;line-height:21px;color:#454545;">C </span>
<span class="t " style="left:704.78px;top:294px;font-size:15px;line-height:21px;color:#454545;">D </span>
<span class="t " style="left:852.20px;top:294px;font-size:15px;line-height:21px;color:#454545;">E </span>
<span class="t " style="left:999.62px;top:294px;font-size:15px;line-height:21px;color:#454545;">F </span>
<span class="t " style="left:1145.37px;top:294px;font-size:15px;line-height:21px;color:#454545;">G </span>
<span class="t " style="left:1292.78px;top:294px;font-size:15px;line-height:21px;color:#454545;">H </span>
<span class="t " style="left:1443.12px;top:294px;font-size:15px;line-height:21px;color:#454545;">I </span>
<span class="t " style="left:1588.45px;top:294px;font-size:15px;line-height:21px;color:#454545;">J </span>
<span class="t " style="left:1734.20px;top:294px;font-size:15px;line-height:21px;color:#454545;">K </span>
<span class="t " style="left:1844.53px;top:294px;font-size:15px;line-height:21px;color:#454545;">L </span>
<span class="t " style="left:13.43px;top:361px;font-size:15.0px;line-height:21px;color:#454545;">1 </span>
<span class="t " style="left:13.43px;top:383px;font-size:15.0px;line-height:21px;color:#1e6e42;">2 </span>
<span class="t " style="left:13.43px;top:405px;font-size:15.0px;line-height:21px;color:#454545;">3 </span>
<span class="t " style="left:13.43px;top:427px;font-size:15.0px;line-height:21px;color:#454545;">4 </span>
<span class="t " style="left:13.43px;top:449px;font-size:15.0px;line-height:21px;color:#454545;">5 </span>
<span class="t " style="left:13.43px;top:471px;font-size:15.0px;line-height:21px;color:#454545;">6 </span>
<span class="t " style="left:13.43px;top:493px;font-size:15.0px;line-height:21px;color:#454545;">7 </span>
<span class="t " style="left:13.43px;top:515px;font-size:15.0px;line-height:21px;color:#454545;">8 </span>
<span class="t " style="left:13.43px;top:537px;font-size:15.0px;line-height:21px;color:#454545;">9 </span>
<span class="t " style="left:9.26px;top:559px;font-size:15.0px;line-height:21px;color:#454545;">10 </span>
<span class="t " style="left:9.81px;top:581px;font-size:15.0px;line-height:21px;color:#454545;">11 </span>
<span class="t " style="left:9.26px;top:603px;font-size:15.0px;line-height:21px;color:#454545;">12 </span>
<span class="t " style="left:9.26px;top:625px;font-size:15.0px;line-height:21px;color:#454545;">13 </span>
<span class="t " style="left:9.26px;top:647px;font-size:15.0px;line-height:21px;color:#454545;">14 </span>
<span class="t " style="left:9.26px;top:669px;font-size:15.0px;line-height:21px;color:#454545;">15 </span>
<span class="t " style="left:9.26px;top:691px;font-size:15.0px;line-height:21px;color:#454545;">16 </span>
<span class="t " style="left:9.26px;top:713px;font-size:15.0px;line-height:21px;color:#454545;">17 </span>
<span class="t " style="left:9.26px;top:735px;font-size:15.0px;line-height:21px;color:#454545;">18 </span>
<span class="t " style="left:9.26px;top:757px;font-size:15.0px;line-height:21px;color:#454545;">19 </span>
<span class="t " style="left:9.26px;top:779px;font-size:15.0px;line-height:21px;color:#454545;">20 </span>
<span class="t " style="left:9.26px;top:801px;font-size:15.0px;line-height:21px;color:#454545;">21 </span>
<span class="t " style="left:9.26px;top:823px;font-size:15.0px;line-height:21px;color:#454545;">22 </span>
<span class="t " style="left:9.26px;top:845px;font-size:15.0px;line-height:21px;color:#454545;">23 </span>
<span class="t " style="left:9.26px;top:867px;font-size:15.0px;line-height:21px;color:#454545;">24 </span>
<span class="t " style="left:9.26px;top:889px;font-size:15.0px;line-height:21px;color:#454545;">25 </span>
<span class="t " style="left:9.26px;top:911px;font-size:15.0px;line-height:21px;color:#454545;">26 </span>
<span class="t " style="left:9.26px;top:933px;font-size:15.0px;line-height:21px;color:#454545;">27 </span>
<div class="cell" style="left:34px;width:146px;padding-left:2.8px;box-sizing:border-box;top:361px;height:21px;line-height:21px;font-size:15.2px;color:#000;letter-spacing:0.148px;">Respondent Id</div>
<div class="cell" style="left:181px;width:200px;padding-left:2.8px;box-sizing:border-box;top:361px;height:21px;line-height:21px;font-size:15.2px;color:#000;letter-spacing:0.064px;">Respondent Name</div>
<div class="cell" style="left:382px;width:255px;padding-left:2.8px;box-sizing:border-box;top:361px;height:21px;line-height:21px;font-size:15.2px;color:#000;letter-spacing:0.062px;">Respondent Email</div>
<div class="cell" style="left:638px;width:146px;padding-left:2.8px;box-sizing:border-box;top:361px;height:21px;line-height:21px;font-size:15.2px;color:#000;letter-spacing:0.101px;">Status</div>
<div class="cell" style="left:785px;width:146px;padding-left:2.8px;box-sizing:border-box;top:339px;height:21px;line-height:21px;font-size:15.2px;color:#000;letter-spacing:-0.053px;">Qn. #1 Please enter</div>
<div class="cell" style="left:785px;width:146px;padding-left:2.8px;box-sizing:border-box;top:361px;height:21px;line-height:21px;font-size:15.2px;color:#000;letter-spacing:0.215px;">your Student IDÂ</div>
<div class="cell" style="left:932px;width:146px;padding-left:2.8px;box-sizing:border-box;top:339px;height:21px;line-height:21px;font-size:15.2px;color:#000;letter-spacing:-0.178px;">Qn. #2 Please select</div>
<div class="cell" style="left:932px;width:146px;padding-left:2.8px;box-sizing:border-box;top:361px;height:21px;line-height:21px;font-size:15.2px;color:#000;letter-spacing:0.071px;">Your School</div>
<div class="cell" style="left:1079px;width:146px;padding-left:2.8px;box-sizing:border-box;top:317px;height:21px;line-height:21px;font-size:15.2px;color:#000;letter-spacing:-0.202px;">Qn. #3 Please</div>
<div class="cell" style="left:1079px;width:146px;padding-left:2.8px;box-sizing:border-box;top:339px;height:21px;line-height:21px;font-size:15.2px;color:#000;letter-spacing:0.386px;">indicate your</div>
<div class="cell" style="left:1079px;width:146px;padding-left:2.8px;box-sizing:border-box;top:361px;height:21px;line-height:21px;font-size:15.2px;color:#000;letter-spacing:0.270px;">Internship Type</div>
<div class="cell" style="left:1226px;width:146px;padding-left:2.8px;box-sizing:border-box;top:339px;height:21px;line-height:21px;font-size:15.2px;color:#000;letter-spacing:0.017px;">Qn. #4 Can you rate</div>
<div class="cell" style="left:1226px;width:146px;padding-left:2.8px;box-sizing:border-box;top:361px;height:21px;line-height:21px;font-size:15.2px;color:#000;letter-spacing:0.270px;">our Organization</div>
<div class="cell" style="left:1373px;width:146px;padding-left:2.8px;box-sizing:border-box;top:361px;height:21px;line-height:21px;font-size:15.2px;color:#000;letter-spacing:-0.262px;">Score</div>
<div class="cell" style="left:1520px;width:146px;padding-left:2.8px;box-sizing:border-box;top:317px;height:21px;line-height:21px;font-size:15.2px;color:#000;letter-spacing:-0.086px;">Qn. #5 Please rate</div>
<div class="cell" style="left:1520px;width:146px;padding-left:2.8px;box-sizing:border-box;top:339px;height:21px;line-height:21px;font-size:15.2px;color:#000;letter-spacing:0.318px;">how interns are</div>
<div class="cell" style="left:1520px;width:146px;padding-left:2.8px;box-sizing:border-box;top:361px;height:21px;line-height:21px;font-size:15.2px;color:#000;letter-spacing:0.554px;">performing</div>
<div class="cell" style="left:1667px;width:146px;padding-left:2.8px;box-sizing:border-box;top:361px;height:21px;line-height:21px;font-size:15.2px;color:#000;letter-spacing:-0.262px;">Score</div>
<div class="cell" style="left:34px;width:146px;padding-right:1.60px;text-align:right;box-sizing:border-box;top:383px;height:21px;line-height:21px;font-size:15.2px;color:#000;letter-spacing:0.696px;">9438</div>
<div class="cell" style="left:181px;width:200px;top:383px;height:21px;line-height:21px;font-size:15.2px;color:#000;"><span style="position:absolute;left:2.50px;top:0;letter-spacing:-0.231px;">AY24SEM1 </span><span style="position:absolute;left:82.30px;top:0;letter-spacing:-1.149px;">SIT </span><span style="position:absolute;left:106.50px;top:0;letter-spacing:0.400px;">Student </span><span style="position:absolute;left:169.70px;top:0;letter-spacing:0.446px;">22 </span></div>
<div class="cell" style="left:382px;width:255px;padding-left:2.8px;box-sizing:border-box;top:383px;height:21px;line-height:21px;font-size:15.2px;color:#000;letter-spacing:0.327px;">ay24sem1sitstudent22@stu.edu.sg</div>
<div class="cell" style="left:638px;width:146px;padding-left:2.8px;box-sizing:border-box;top:383px;height:21px;line-height:21px;font-size:15.2px;color:#000;letter-spacing:0.299px;">Completed</div>
<div class="cell" style="left:785px;width:146px;padding-left:2.8px;box-sizing:border-box;top:383px;height:21px;line-height:21px;font-size:15.2px;color:#000;letter-spacing:0.112px;">STU1478520</div>
<div class="cell" style="left:932px;width:146px;padding-left:2.8px;box-sizing:border-box;top:383px;height:21px;line-height:21px;font-size:15.2px;color:#000;letter-spacing:0.164px;">school of business &amp;</div>
<div class="cell" style="left:1079px;width:146px;padding-left:2.8px;box-sizing:border-box;top:383px;height:21px;line-height:21px;font-size:15.2px;color:#000;letter-spacing:0.180px;">Local Internship</div>
<div class="cell" style="left:1226px;width:146px;padding-left:2.8px;box-sizing:border-box;top:383px;height:21px;line-height:21px;font-size:15.2px;color:#000;letter-spacing:-0.053px;">Excellent</div>
<div class="cell" style="left:1520px;width:146px;padding-left:2.8px;box-sizing:border-box;top:383px;height:21px;line-height:21px;font-size:15.2px;color:#000;letter-spacing:0.309px;">Very Well</div>
<div class="cell" style="left:1373px;width:146px;padding-right:1.60px;text-align:right;box-sizing:border-box;top:383px;height:21px;line-height:21px;font-size:15.2px;color:#000;letter-spacing:0.696px;">100</div>
<div class="cell" style="left:1667px;width:146px;padding-right:1.60px;text-align:right;box-sizing:border-box;top:383px;height:21px;line-height:21px;font-size:15.2px;color:#000;letter-spacing:0.696px;">100</div>
<div class="cell" style="left:34px;width:146px;padding-right:1.60px;text-align:right;box-sizing:border-box;top:405px;height:21px;line-height:21px;font-size:15.2px;color:#000;letter-spacing:0.696px;">9435</div>
<div class="cell" style="left:181px;width:200px;top:405px;height:21px;line-height:21px;font-size:15.2px;color:#000;"><span style="position:absolute;left:2.50px;top:0;letter-spacing:-0.231px;">AY24SEM1 </span><span style="position:absolute;left:82.30px;top:0;letter-spacing:-1.149px;">SIT </span><span style="position:absolute;left:106.50px;top:0;letter-spacing:0.400px;">Student </span><span style="position:absolute;left:169.70px;top:0;letter-spacing:0.446px;">25 </span></div>
<div class="cell" style="left:382px;width:255px;padding-left:2.8px;box-sizing:border-box;top:405px;height:21px;line-height:21px;font-size:15.2px;color:#000;letter-spacing:0.327px;">ay24sem1sitstudent25@stu.edu.sg</div>
<div class="cell" style="left:638px;width:146px;padding-left:2.8px;box-sizing:border-box;top:405px;height:21px;line-height:21px;font-size:15.2px;color:#000;letter-spacing:0.492px;">Draft</div>
<div class="cell" style="left:785px;width:146px;padding-left:2.8px;box-sizing:border-box;top:405px;height:21px;line-height:21px;font-size:15.2px;color:#000;letter-spacing:0.194px;">-</div>
<div class="cell" style="left:932px;width:146px;padding-left:2.8px;box-sizing:border-box;top:405px;height:21px;line-height:21px;font-size:15.2px;color:#000;letter-spacing:0.194px;">-</div>
<div class="cell" style="left:1079px;width:146px;padding-left:2.8px;box-sizing:border-box;top:405px;height:21px;line-height:21px;font-size:15.2px;color:#000;letter-spacing:0.194px;">-</div>
<div class="cell" style="left:1226px;width:146px;padding-left:2.8px;box-sizing:border-box;top:405px;height:21px;line-height:21px;font-size:15.2px;color:#000;letter-spacing:0.194px;">-</div>
<div class="cell" style="left:1373px;width:146px;padding-left:2.8px;box-sizing:border-box;top:405px;height:21px;line-height:21px;font-size:15.2px;color:#000;letter-spacing:0.194px;">-</div>
<div class="cell" style="left:1520px;width:146px;padding-left:2.8px;box-sizing:border-box;top:405px;height:21px;line-height:21px;font-size:15.2px;color:#000;letter-spacing:0.194px;">-</div>
<div class="cell" style="left:1667px;width:146px;padding-left:2.8px;box-sizing:border-box;top:405px;height:21px;line-height:21px;font-size:15.2px;color:#000;letter-spacing:0.194px;">-</div>
<div class="cell" style="left:34px;width:146px;padding-right:1.60px;text-align:right;box-sizing:border-box;top:427px;height:21px;line-height:21px;font-size:15.2px;color:#000;letter-spacing:0.696px;">9409</div>
<div class="cell" style="left:181px;width:200px;top:427px;height:21px;line-height:21px;font-size:15.2px;color:#000;"><span style="position:absolute;left:2.50px;top:0;letter-spacing:-0.231px;">AY24SEM1 </span><span style="position:absolute;left:83.30px;top:0;letter-spacing:-0.150px;">HMIS </span><span style="position:absolute;left:124.20px;top:0;letter-spacing:0.429px;">Student </span><span style="position:absolute;left:184.10px;top:0;letter-spacing:0.446px;">42 </span></div>
<div class="cell" style="left:382px;width:255px;padding-left:2.8px;box-sizing:border-box;top:427px;height:21px;line-height:21px;font-size:15.2px;color:#000;letter-spacing:0.132px;">ay24sem1hmisstudent42@stu.edu.sg</div>
<div class="cell" style="left:638px;width:146px;padding-left:2.8px;box-sizing:border-box;top:427px;height:21px;line-height:21px;font-size:15.2px;color:#000;letter-spacing:0.492px;">Draft</div>
<div class="cell" style="left:785px;width:146px;padding-left:2.8px;box-sizing:border-box;top:427px;height:21px;line-height:21px;font-size:15.2px;color:#000;letter-spacing:0.194px;">-</div>
<div class="cell" style="left:932px;width:146px;padding-left:2.8px;box-sizing:border-box;top:427px;height:21px;line-height:21px;font-size:15.2px;color:#000;letter-spacing:0.194px;">-</div>
<div class="cell" style="left:1079px;width:146px;padding-left:2.8px;box-sizing:border-box;top:427px;height:21px;line-height:21px;font-size:15.2px;color:#000;letter-spacing:0.194px;">-</div>
<div class="cell" style="left:1226px;width:146px;padding-left:2.8px;box-sizing:border-box;top:427px;height:21px;line-height:21px;font-size:15.2px;color:#000;letter-spacing:0.194px;">-</div>
<div class="cell" style="left:1373px;width:146px;padding-left:2.8px;box-sizing:border-box;top:427px;height:21px;line-height:21px;font-size:15.2px;color:#000;letter-spacing:0.194px;">-</div>
<div class="cell" style="left:1520px;width:146px;padding-left:2.8px;box-sizing:border-box;top:427px;height:21px;line-height:21px;font-size:15.2px;color:#000;letter-spacing:0.194px;">-</div>
<div class="cell" style="left:1667px;width:146px;padding-left:2.8px;box-sizing:border-box;top:427px;height:21px;line-height:21px;font-size:15.2px;color:#000;letter-spacing:0.194px;">-</div>
<div class="cell" style="left:34px;width:146px;padding-right:1.60px;text-align:right;box-sizing:border-box;top:449px;height:21px;line-height:21px;font-size:15.2px;color:#000;letter-spacing:0.696px;">9415</div>
<div class="cell" style="left:181px;width:200px;top:449px;height:21px;line-height:21px;font-size:15.2px;color:#000;"><span style="position:absolute;left:2.50px;top:0;letter-spacing:-0.231px;">AY24SEM1 </span><span style="position:absolute;left:82.90px;top:0;letter-spacing:-1.372px;">SBA </span><span style="position:absolute;left:113.40px;top:0;letter-spacing:0.429px;">Student </span><span style="position:absolute;left:174.30px;top:0;letter-spacing:-0.404px;">10 </span></div>
<div class="cell" style="left:382px;width:255px;padding-left:2.8px;box-sizing:border-box;top:449px;height:21px;line-height:21px;font-size:15.2px;color:#000;letter-spacing:0.181px;">ay24sem1sbastudent10@stu.edu.sg</div>
<div class="cell" style="left:638px;width:146px;padding-left:2.8px;box-sizing:border-box;top:449px;height:21px;line-height:21px;font-size:15.2px;color:#000;letter-spacing:0.492px;">Draft</div>
<div class="cell" style="left:785px;width:146px;padding-left:2.8px;box-sizing:border-box;top:449px;height:21px;line-height:21px;font-size:15.2px;color:#000;letter-spacing:0.194px;">-</div>
<div class="cell" style="left:932px;width:146px;padding-left:2.8px;box-sizing:border-box;top:449px;height:21px;line-height:21px;font-size:15.2px;color:#000;letter-spacing:0.194px;">-</div>
<div class="cell" style="left:1079px;width:146px;padding-left:2.8px;box-sizing:border-box;top:449px;height:21px;line-height:21px;font-size:15.2px;color:#000;letter-spacing:0.194px;">-</div>
<div class="cell" style="left:1226px;width:146px;padding-left:2.8px;box-sizing:border-box;top:449px;height:21px;line-height:21px;font-size:15.2px;color:#000;letter-spacing:0.194px;">-</div>
<div class="cell" style="left:1373px;width:146px;padding-left:2.8px;box-sizing:border-box;top:449px;height:21px;line-height:21px;font-size:15.2px;color:#000;letter-spacing:0.194px;">-</div>
<div class="cell" style="left:1520px;width:146px;padding-left:2.8px;box-sizing:border-box;top:449px;height:21px;line-height:21px;font-size:15.2px;color:#000;letter-spacing:0.194px;">-</div>
<div class="cell" style="left:1667px;width:146px;padding-left:2.8px;box-sizing:border-box;top:449px;height:21px;line-height:21px;font-size:15.2px;color:#000;letter-spacing:0.194px;">-</div>
<div class="cell" style="left:34px;width:146px;padding-right:1.60px;text-align:right;box-sizing:border-box;top:471px;height:21px;line-height:21px;font-size:15.2px;color:#000;letter-spacing:0.696px;">9419</div>
<div class="cell" style="left:181px;width:200px;top:471px;height:21px;line-height:21px;font-size:15.2px;color:#000;"><span style="position:absolute;left:2.50px;top:0;letter-spacing:-0.231px;">AY24SEM1 </span><span style="position:absolute;left:82.90px;top:0;letter-spacing:-1.372px;">SBA </span><span style="position:absolute;left:113.40px;top:0;letter-spacing:0.429px;">Student </span><span style="position:absolute;left:174.30px;top:0;letter-spacing:-0.404px;">07 </span></div>
<div class="cell" style="left:382px;width:255px;padding-left:2.8px;box-sizing:border-box;top:471px;height:21px;line-height:21px;font-size:15.2px;color:#000;letter-spacing:0.181px;">ay24sem1sbastudent07@stu.edu.sg</div>
<div class="cell" style="left:638px;width:146px;padding-left:2.8px;box-sizing:border-box;top:471px;height:21px;line-height:21px;font-size:15.2px;color:#000;letter-spacing:0.492px;">Draft</div>
<div class="cell" style="left:785px;width:146px;padding-left:2.8px;box-sizing:border-box;top:471px;height:21px;line-height:21px;font-size:15.2px;color:#000;letter-spacing:0.194px;">-</div>
<div class="cell" style="left:932px;width:146px;padding-left:2.8px;box-sizing:border-box;top:471px;height:21px;line-height:21px;font-size:15.2px;color:#000;letter-spacing:0.194px;">-</div>
<div class="cell" style="left:1079px;width:146px;padding-left:2.8px;box-sizing:border-box;top:471px;height:21px;line-height:21px;font-size:15.2px;color:#000;letter-spacing:0.194px;">-</div>
<div class="cell" style="left:1226px;width:146px;padding-left:2.8px;box-sizing:border-box;top:471px;height:21px;line-height:21px;font-size:15.2px;color:#000;letter-spacing:0.194px;">-</div>
<div class="cell" style="left:1373px;width:146px;padding-left:2.8px;box-sizing:border-box;top:471px;height:21px;line-height:21px;font-size:15.2px;color:#000;letter-spacing:0.194px;">-</div>
<div class="cell" style="left:1520px;width:146px;padding-left:2.8px;box-sizing:border-box;top:471px;height:21px;line-height:21px;font-size:15.2px;color:#000;letter-spacing:0.194px;">-</div>
<div class="cell" style="left:1667px;width:146px;padding-left:2.8px;box-sizing:border-box;top:471px;height:21px;line-height:21px;font-size:15.2px;color:#000;letter-spacing:0.194px;">-</div>
<div class="cell" style="left:34px;width:146px;padding-right:1.60px;text-align:right;box-sizing:border-box;top:493px;height:21px;line-height:21px;font-size:15.2px;color:#000;letter-spacing:0.696px;">9423</div>
<div class="cell" style="left:181px;width:200px;top:493px;height:21px;line-height:21px;font-size:15.2px;color:#000;"><span style="position:absolute;left:2.50px;top:0;letter-spacing:-0.231px;">AY24SEM1 </span><span style="position:absolute;left:82.90px;top:0;letter-spacing:-1.372px;">SBA </span><span style="position:absolute;left:113.40px;top:0;letter-spacing:0.429px;">Student </span><span style="position:absolute;left:174.30px;top:0;letter-spacing:-0.404px;">02 </span></div>
<div class="cell" style="left:382px;width:255px;padding-left:2.8px;box-sizing:border-box;top:493px;height:21px;line-height:21px;font-size:15.2px;color:#000;letter-spacing:0.181px;">ay24sem1sbastudent02@stu.edu.sg</div>
<div class="cell" style="left:638px;width:146px;padding-left:2.8px;box-sizing:border-box;top:493px;height:21px;line-height:21px;font-size:15.2px;color:#000;letter-spacing:0.492px;">Draft</div>
<div class="cell" style="left:785px;width:146px;padding-left:2.8px;box-sizing:border-box;top:493px;height:21px;line-height:21px;font-size:15.2px;color:#000;letter-spacing:0.194px;">-</div>
<div class="cell" style="left:932px;width:146px;padding-left:2.8px;box-sizing:border-box;top:493px;height:21px;line-height:21px;font-size:15.2px;color:#000;letter-spacing:0.194px;">-</div>
<div class="cell" style="left:1079px;width:146px;padding-left:2.8px;box-sizing:border-box;top:493px;height:21px;line-height:21px;font-size:15.2px;color:#000;letter-spacing:0.194px;">-</div>
<div class="cell" style="left:1226px;width:146px;padding-left:2.8px;box-sizing:border-box;top:493px;height:21px;line-height:21px;font-size:15.2px;color:#000;letter-spacing:0.194px;">-</div>
<div class="cell" style="left:1373px;width:146px;padding-left:2.8px;box-sizing:border-box;top:493px;height:21px;line-height:21px;font-size:15.2px;color:#000;letter-spacing:0.194px;">-</div>
<div class="cell" style="left:1520px;width:146px;padding-left:2.8px;box-sizing:border-box;top:493px;height:21px;line-height:21px;font-size:15.2px;color:#000;letter-spacing:0.194px;">-</div>
<div class="cell" style="left:1667px;width:146px;padding-left:2.8px;box-sizing:border-box;top:493px;height:21px;line-height:21px;font-size:15.2px;color:#000;letter-spacing:0.194px;">-</div>
<div class="cell" style="left:34px;width:146px;padding-right:1.60px;text-align:right;box-sizing:border-box;top:515px;height:21px;line-height:21px;font-size:15.2px;color:#000;letter-spacing:0.696px;">9429</div>
<div class="cell" style="left:181px;width:200px;top:515px;height:21px;line-height:21px;font-size:15.2px;color:#000;"><span style="position:absolute;left:2.50px;top:0;letter-spacing:-0.231px;">AY24SEM1 </span><span style="position:absolute;left:82.30px;top:0;letter-spacing:-1.149px;">SIT </span><span style="position:absolute;left:106.50px;top:0;letter-spacing:0.400px;">Student </span><span style="position:absolute;left:169.70px;top:0;letter-spacing:0.446px;">31 </span></div>
<div class="cell" style="left:382px;width:255px;padding-left:2.8px;box-sizing:border-box;top:515px;height:21px;line-height:21px;font-size:15.2px;color:#000;letter-spacing:0.327px;">ay24sem1sitstudent31@stu.edu.sg</div>
<div class="cell" style="left:638px;width:146px;padding-left:2.8px;box-sizing:border-box;top:515px;height:21px;line-height:21px;font-size:15.2px;color:#000;letter-spacing:0.492px;">Draft</div>
<div class="cell" style="left:785px;width:146px;padding-left:2.8px;box-sizing:border-box;top:515px;height:21px;line-height:21px;font-size:15.2px;color:#000;letter-spacing:0.194px;">-</div>
<div class="cell" style="left:932px;width:146px;padding-left:2.8px;box-sizing:border-box;top:515px;height:21px;line-height:21px;font-size:15.2px;color:#000;letter-spacing:0.194px;">-</div>
<div class="cell" style="left:1079px;width:146px;padding-left:2.8px;box-sizing:border-box;top:515px;height:21px;line-height:21px;font-size:15.2px;color:#000;letter-spacing:0.194px;">-</div>
<div class="cell" style="left:1226px;width:146px;padding-left:2.8px;box-sizing:border-box;top:515px;height:21px;line-height:21px;font-size:15.2px;color:#000;letter-spacing:0.194px;">-</div>
<div class="cell" style="left:1373px;width:146px;padding-left:2.8px;box-sizing:border-box;top:515px;height:21px;line-height:21px;font-size:15.2px;color:#000;letter-spacing:0.194px;">-</div>
<div class="cell" style="left:1520px;width:146px;padding-left:2.8px;box-sizing:border-box;top:515px;height:21px;line-height:21px;font-size:15.2px;color:#000;letter-spacing:0.194px;">-</div>
<div class="cell" style="left:1667px;width:146px;padding-left:2.8px;box-sizing:border-box;top:515px;height:21px;line-height:21px;font-size:15.2px;color:#000;letter-spacing:0.194px;">-</div>
<div class="cell" style="left:34px;width:146px;padding-right:1.60px;text-align:right;box-sizing:border-box;top:537px;height:21px;line-height:21px;font-size:15.2px;color:#000;letter-spacing:0.696px;">9437</div>
<div class="cell" style="left:181px;width:200px;top:537px;height:21px;line-height:21px;font-size:15.2px;color:#000;"><span style="position:absolute;left:2.50px;top:0;letter-spacing:-0.231px;">AY24SEM1 </span><span style="position:absolute;left:82.30px;top:0;letter-spacing:-1.149px;">SIT </span><span style="position:absolute;left:106.50px;top:0;letter-spacing:0.400px;">Student </span><span style="position:absolute;left:169.70px;top:0;letter-spacing:0.446px;">23 </span></div>
<div class="cell" style="left:382px;width:255px;padding-left:2.8px;box-sizing:border-box;top:537px;height:21px;line-height:21px;font-size:15.2px;color:#000;letter-spacing:0.327px;">ay24sem1sitstudent23@stu.edu.sg</div>
<div class="cell" style="left:638px;width:146px;padding-left:2.8px;box-sizing:border-box;top:537px;height:21px;line-height:21px;font-size:15.2px;color:#000;letter-spacing:0.492px;">Draft</div>
<div class="cell" style="left:785px;width:146px;padding-left:2.8px;box-sizing:border-box;top:537px;height:21px;line-height:21px;font-size:15.2px;color:#000;letter-spacing:0.194px;">-</div>
<div class="cell" style="left:932px;width:146px;padding-left:2.8px;box-sizing:border-box;top:537px;height:21px;line-height:21px;font-size:15.2px;color:#000;letter-spacing:0.194px;">-</div>
<div class="cell" style="left:1079px;width:146px;padding-left:2.8px;box-sizing:border-box;top:537px;height:21px;line-height:21px;font-size:15.2px;color:#000;letter-spacing:0.194px;">-</div>
<div class="cell" style="left:1226px;width:146px;padding-left:2.8px;box-sizing:border-box;top:537px;height:21px;line-height:21px;font-size:15.2px;color:#000;letter-spacing:0.194px;">-</div>
<div class="cell" style="left:1373px;width:146px;padding-left:2.8px;box-sizing:border-box;top:537px;height:21px;line-height:21px;font-size:15.2px;color:#000;letter-spacing:0.194px;">-</div>
<div class="cell" style="left:1520px;width:146px;padding-left:2.8px;box-sizing:border-box;top:537px;height:21px;line-height:21px;font-size:15.2px;color:#000;letter-spacing:0.194px;">-</div>
<div class="cell" style="left:1667px;width:146px;padding-left:2.8px;box-sizing:border-box;top:537px;height:21px;line-height:21px;font-size:15.2px;color:#000;letter-spacing:0.194px;">-</div>
<div class="cell" style="left:34px;width:146px;padding-right:1.60px;text-align:right;box-sizing:border-box;top:559px;height:21px;line-height:21px;font-size:15.2px;color:#000;letter-spacing:0.696px;">9410</div>
<div class="cell" style="left:181px;width:200px;top:559px;height:21px;line-height:21px;font-size:15.2px;color:#000;"><span style="position:absolute;left:2.50px;top:0;letter-spacing:-0.231px;">AY24SEM1 </span><span style="position:absolute;left:83.30px;top:0;letter-spacing:-0.150px;">HMIS </span><span style="position:absolute;left:124.20px;top:0;letter-spacing:0.429px;">Student </span><span style="position:absolute;left:184.10px;top:0;letter-spacing:0.446px;">40 </span></div>
<div class="cell" style="left:382px;width:255px;padding-left:2.8px;box-sizing:border-box;top:559px;height:21px;line-height:21px;font-size:15.2px;color:#000;letter-spacing:0.132px;">ay24sem1hmisstudent40@stu.edu.sg</div>
<div class="cell" style="left:638px;width:146px;padding-left:2.8px;box-sizing:border-box;top:559px;height:21px;line-height:21px;font-size:15.2px;color:#000;letter-spacing:0.492px;">Draft</div>
<div class="cell" style="left:785px;width:146px;padding-left:2.8px;box-sizing:border-box;top:559px;height:21px;line-height:21px;font-size:15.2px;color:#000;letter-spacing:0.194px;">-</div>
<div class="cell" style="left:932px;width:146px;padding-left:2.8px;box-sizing:border-box;top:559px;height:21px;line-height:21px;font-size:15.2px;color:#000;letter-spacing:0.194px;">-</div>
<div class="cell" style="left:1079px;width:146px;padding-left:2.8px;box-sizing:border-box;top:559px;height:21px;line-height:21px;font-size:15.2px;color:#000;letter-spacing:0.194px;">-</div>
<div class="cell" style="left:1226px;width:146px;padding-left:2.8px;box-sizing:border-box;top:559px;height:21px;line-height:21px;font-size:15.2px;color:#000;letter-spacing:0.194px;">-</div>
<div class="cell" style="left:1373px;width:146px;padding-left:2.8px;box-sizing:border-box;top:559px;height:21px;line-height:21px;font-size:15.2px;color:#000;letter-spacing:0.194px;">-</div>
<div class="cell" style="left:1520px;width:146px;padding-left:2.8px;box-sizing:border-box;top:559px;height:21px;line-height:21px;font-size:15.2px;color:#000;letter-spacing:0.194px;">-</div>
<div class="cell" style="left:1667px;width:146px;padding-left:2.8px;box-sizing:border-box;top:559px;height:21px;line-height:21px;font-size:15.2px;color:#000;letter-spacing:0.194px;">-</div>
<div class="cell" style="left:34px;width:146px;padding-right:1.60px;text-align:right;box-sizing:border-box;top:581px;height:21px;line-height:21px;font-size:15.2px;color:#000;letter-spacing:0.696px;">9413</div>
<div class="cell" style="left:181px;width:200px;top:581px;height:21px;line-height:21px;font-size:15.2px;color:#000;"><span style="position:absolute;left:2.50px;top:0;letter-spacing:-0.231px;">AY24SEM1 </span><span style="position:absolute;left:83.30px;top:0;letter-spacing:-0.150px;">HMIS </span><span style="position:absolute;left:124.20px;top:0;letter-spacing:0.429px;">Student </span><span style="position:absolute;left:184.10px;top:0;letter-spacing:0.446px;">34 </span></div>
<div class="cell" style="left:382px;width:255px;padding-left:2.8px;box-sizing:border-box;top:581px;height:21px;line-height:21px;font-size:15.2px;color:#000;letter-spacing:0.132px;">ay24sem1hmisstudent34@stu.edu.sg</div>
<div class="cell" style="left:638px;width:146px;padding-left:2.8px;box-sizing:border-box;top:581px;height:21px;line-height:21px;font-size:15.2px;color:#000;letter-spacing:0.492px;">Draft</div>
<div class="cell" style="left:785px;width:146px;padding-left:2.8px;box-sizing:border-box;top:581px;height:21px;line-height:21px;font-size:15.2px;color:#000;letter-spacing:0.194px;">-</div>
<div class="cell" style="left:932px;width:146px;padding-left:2.8px;box-sizing:border-box;top:581px;height:21px;line-height:21px;font-size:15.2px;color:#000;letter-spacing:0.194px;">-</div>
<div class="cell" style="left:1079px;width:146px;padding-left:2.8px;box-sizing:border-box;top:581px;height:21px;line-height:21px;font-size:15.2px;color:#000;letter-spacing:0.194px;">-</div>
<div class="cell" style="left:1226px;width:146px;padding-left:2.8px;box-sizing:border-box;top:581px;height:21px;line-height:21px;font-size:15.2px;color:#000;letter-spacing:0.194px;">-</div>
<div class="cell" style="left:1373px;width:146px;padding-left:2.8px;box-sizing:border-box;top:581px;height:21px;line-height:21px;font-size:15.2px;color:#000;letter-spacing:0.194px;">-</div>
<div class="cell" style="left:1520px;width:146px;padding-left:2.8px;box-sizing:border-box;top:581px;height:21px;line-height:21px;font-size:15.2px;color:#000;letter-spacing:0.194px;">-</div>
<div class="cell" style="left:1667px;width:146px;padding-left:2.8px;box-sizing:border-box;top:581px;height:21px;line-height:21px;font-size:15.2px;color:#000;letter-spacing:0.194px;">-</div>
<div class="cell" style="left:34px;width:146px;padding-right:1.60px;text-align:right;box-sizing:border-box;top:603px;height:21px;line-height:21px;font-size:15.2px;color:#000;letter-spacing:0.696px;">9417</div>
<div class="cell" style="left:181px;width:200px;top:603px;height:21px;line-height:21px;font-size:15.2px;color:#000;"><span style="position:absolute;left:2.50px;top:0;letter-spacing:-0.231px;">AY24SEM1 </span><span style="position:absolute;left:82.90px;top:0;letter-spacing:-1.372px;">SBA </span><span style="position:absolute;left:113.40px;top:0;letter-spacing:0.429px;">Student </span><span style="position:absolute;left:174.30px;top:0;letter-spacing:-0.404px;">09 </span></div>
<div class="cell" style="left:382px;width:255px;padding-left:2.8px;box-sizing:border-box;top:603px;height:21px;line-height:21px;font-size:15.2px;color:#000;letter-spacing:0.181px;">ay24sem1sbastudent09@stu.edu.sg</div>
<div class="cell" style="left:638px;width:146px;padding-left:2.8px;box-sizing:border-box;top:603px;height:21px;line-height:21px;font-size:15.2px;color:#000;letter-spacing:0.492px;">Draft</div>
<div class="cell" style="left:785px;width:146px;padding-left:2.8px;box-sizing:border-box;top:603px;height:21px;line-height:21px;font-size:15.2px;color:#000;letter-spacing:0.194px;">-</div>
<div class="cell" style="left:932px;width:146px;padding-left:2.8px;box-sizing:border-box;top:603px;height:21px;line-height:21px;font-size:15.2px;color:#000;letter-spacing:0.194px;">-</div>
<div class="cell" style="left:1079px;width:146px;padding-left:2.8px;box-sizing:border-box;top:603px;height:21px;line-height:21px;font-size:15.2px;color:#000;letter-spacing:0.194px;">-</div>
<div class="cell" style="left:1226px;width:146px;padding-left:2.8px;box-sizing:border-box;top:603px;height:21px;line-height:21px;font-size:15.2px;color:#000;letter-spacing:0.194px;">-</div>
<div class="cell" style="left:1373px;width:146px;padding-left:2.8px;box-sizing:border-box;top:603px;height:21px;line-height:21px;font-size:15.2px;color:#000;letter-spacing:0.194px;">-</div>
<div class="cell" style="left:1520px;width:146px;padding-left:2.8px;box-sizing:border-box;top:603px;height:21px;line-height:21px;font-size:15.2px;color:#000;letter-spacing:0.194px;">-</div>
<div class="cell" style="left:1667px;width:146px;padding-left:2.8px;box-sizing:border-box;top:603px;height:21px;line-height:21px;font-size:15.2px;color:#000;letter-spacing:0.194px;">-</div>
<div class="cell" style="left:34px;width:146px;padding-right:1.60px;text-align:right;box-sizing:border-box;top:625px;height:21px;line-height:21px;font-size:15.2px;color:#000;letter-spacing:0.696px;">9422</div>
<div class="cell" style="left:181px;width:200px;top:625px;height:21px;line-height:21px;font-size:15.2px;color:#000;"><span style="position:absolute;left:2.50px;top:0;letter-spacing:-0.231px;">AY24SEM1 </span><span style="position:absolute;left:82.90px;top:0;letter-spacing:-1.372px;">SBA </span><span style="position:absolute;left:113.40px;top:0;letter-spacing:0.429px;">Student </span><span style="position:absolute;left:174.30px;top:0;letter-spacing:-0.404px;">03 </span></div>
<div class="cell" style="left:382px;width:255px;padding-left:2.8px;box-sizing:border-box;top:625px;height:21px;line-height:21px;font-size:15.2px;color:#000;letter-spacing:0.181px;">ay24sem1sbastudent03@stu.edu.sg</div>
<div class="cell" style="left:638px;width:146px;padding-left:2.8px;box-sizing:border-box;top:625px;height:21px;line-height:21px;font-size:15.2px;color:#000;letter-spacing:0.492px;">Draft</div>
<div class="cell" style="left:785px;width:146px;padding-left:2.8px;box-sizing:border-box;top:625px;height:21px;line-height:21px;font-size:15.2px;color:#000;letter-spacing:0.194px;">-</div>
<div class="cell" style="left:932px;width:146px;padding-left:2.8px;box-sizing:border-box;top:625px;height:21px;line-height:21px;font-size:15.2px;color:#000;letter-spacing:0.194px;">-</div>
<div class="cell" style="left:1079px;width:146px;padding-left:2.8px;box-sizing:border-box;top:625px;height:21px;line-height:21px;font-size:15.2px;color:#000;letter-spacing:0.194px;">-</div>
<div class="cell" style="left:1226px;width:146px;padding-left:2.8px;box-sizing:border-box;top:625px;height:21px;line-height:21px;font-size:15.2px;color:#000;letter-spacing:0.194px;">-</div>
<div class="cell" style="left:1373px;width:146px;padding-left:2.8px;box-sizing:border-box;top:625px;height:21px;line-height:21px;font-size:15.2px;color:#000;letter-spacing:0.194px;">-</div>
<div class="cell" style="left:1520px;width:146px;padding-left:2.8px;box-sizing:border-box;top:625px;height:21px;line-height:21px;font-size:15.2px;color:#000;letter-spacing:0.194px;">-</div>
<div class="cell" style="left:1667px;width:146px;padding-left:2.8px;box-sizing:border-box;top:625px;height:21px;line-height:21px;font-size:15.2px;color:#000;letter-spacing:0.194px;">-</div>
<div class="cell" style="left:34px;width:146px;padding-right:1.60px;text-align:right;box-sizing:border-box;top:647px;height:21px;line-height:21px;font-size:15.2px;color:#000;letter-spacing:0.696px;">9427</div>
<div class="cell" style="left:181px;width:200px;top:647px;height:21px;line-height:21px;font-size:15.2px;color:#000;"><span style="position:absolute;left:2.50px;top:0;letter-spacing:-0.231px;">AY24SEM1 </span><span style="position:absolute;left:82.30px;top:0;letter-spacing:-1.149px;">SIT </span><span style="position:absolute;left:106.50px;top:0;letter-spacing:0.400px;">Student </span><span style="position:absolute;left:169.70px;top:0;letter-spacing:0.446px;">33 </span></div>
<div class="cell" style="left:382px;width:255px;padding-left:2.8px;box-sizing:border-box;top:647px;height:21px;line-height:21px;font-size:15.2px;color:#000;letter-spacing:0.327px;">ay24sem1sitstudent33@stu.edu.sg</div>
<div class="cell" style="left:638px;width:146px;padding-left:2.8px;box-sizing:border-box;top:647px;height:21px;line-height:21px;font-size:15.2px;color:#000;letter-spacing:0.492px;">Draft</div>
<div class="cell" style="left:785px;width:146px;padding-left:2.8px;box-sizing:border-box;top:647px;height:21px;line-height:21px;font-size:15.2px;color:#000;letter-spacing:0.194px;">-</div>
<div class="cell" style="left:932px;width:146px;padding-left:2.8px;box-sizing:border-box;top:647px;height:21px;line-height:21px;font-size:15.2px;color:#000;letter-spacing:0.194px;">-</div>
<div class="cell" style="left:1079px;width:146px;padding-left:2.8px;box-sizing:border-box;top:647px;height:21px;line-height:21px;font-size:15.2px;color:#000;letter-spacing:0.194px;">-</div>
<div class="cell" style="left:1226px;width:146px;padding-left:2.8px;box-sizing:border-box;top:647px;height:21px;line-height:21px;font-size:15.2px;color:#000;letter-spacing:0.194px;">-</div>
<div class="cell" style="left:1373px;width:146px;padding-left:2.8px;box-sizing:border-box;top:647px;height:21px;line-height:21px;font-size:15.2px;color:#000;letter-spacing:0.194px;">-</div>
<div class="cell" style="left:1520px;width:146px;padding-left:2.8px;box-sizing:border-box;top:647px;height:21px;line-height:21px;font-size:15.2px;color:#000;letter-spacing:0.194px;">-</div>
<div class="cell" style="left:1667px;width:146px;padding-left:2.8px;box-sizing:border-box;top:647px;height:21px;line-height:21px;font-size:15.2px;color:#000;letter-spacing:0.194px;">-</div>
<div class="cell" style="left:34px;width:146px;padding-right:1.60px;text-align:right;box-sizing:border-box;top:669px;height:21px;line-height:21px;font-size:15.2px;color:#000;letter-spacing:0.696px;">9432</div>
<div class="cell" style="left:181px;width:200px;top:669px;height:21px;line-height:21px;font-size:15.2px;color:#000;"><span style="position:absolute;left:2.50px;top:0;letter-spacing:-0.231px;">AY24SEM1 </span><span style="position:absolute;left:82.30px;top:0;letter-spacing:-1.149px;">SIT </span><span style="position:absolute;left:106.50px;top:0;letter-spacing:0.400px;">Student </span><span style="position:absolute;left:169.70px;top:0;letter-spacing:0.446px;">28 </span></div>
<div class="cell" style="left:382px;width:255px;padding-left:2.8px;box-sizing:border-box;top:669px;height:21px;line-height:21px;font-size:15.2px;color:#000;letter-spacing:0.327px;">ay24sem1sitstudent28@stu.edu.sg</div>
<div class="cell" style="left:638px;width:146px;padding-left:2.8px;box-sizing:border-box;top:669px;height:21px;line-height:21px;font-size:15.2px;color:#000;letter-spacing:0.492px;">Draft</div>
<div class="cell" style="left:785px;width:146px;padding-left:2.8px;box-sizing:border-box;top:669px;height:21px;line-height:21px;font-size:15.2px;color:#000;letter-spacing:0.194px;">-</div>
<div class="cell" style="left:932px;width:146px;padding-left:2.8px;box-sizing:border-box;top:669px;height:21px;line-height:21px;font-size:15.2px;color:#000;letter-spacing:0.194px;">-</div>
<div class="cell" style="left:1079px;width:146px;padding-left:2.8px;box-sizing:border-box;top:669px;height:21px;line-height:21px;font-size:15.2px;color:#000;letter-spacing:0.194px;">-</div>
<div class="cell" style="left:1226px;width:146px;padding-left:2.8px;box-sizing:border-box;top:669px;height:21px;line-height:21px;font-size:15.2px;color:#000;letter-spacing:0.194px;">-</div>
<div class="cell" style="left:1373px;width:146px;padding-left:2.8px;box-sizing:border-box;top:669px;height:21px;line-height:21px;font-size:15.2px;color:#000;letter-spacing:0.194px;">-</div>
<div class="cell" style="left:1520px;width:146px;padding-left:2.8px;box-sizing:border-box;top:669px;height:21px;line-height:21px;font-size:15.2px;color:#000;letter-spacing:0.194px;">-</div>
<div class="cell" style="left:1667px;width:146px;padding-left:2.8px;box-sizing:border-box;top:669px;height:21px;line-height:21px;font-size:15.2px;color:#000;letter-spacing:0.194px;">-</div>
<div class="cell" style="left:34px;width:146px;padding-right:1.60px;text-align:right;box-sizing:border-box;top:691px;height:21px;line-height:21px;font-size:15.2px;color:#000;letter-spacing:0.696px;">9412</div>
<div class="cell" style="left:181px;width:200px;top:691px;height:21px;line-height:21px;font-size:15.2px;color:#000;"><span style="position:absolute;left:2.50px;top:0;letter-spacing:-0.231px;">AY24SEM1 </span><span style="position:absolute;left:83.30px;top:0;letter-spacing:-0.150px;">HMIS </span><span style="position:absolute;left:124.20px;top:0;letter-spacing:0.429px;">Student </span><span style="position:absolute;left:184.10px;top:0;letter-spacing:0.446px;">38 </span></div>
<div class="cell" style="left:382px;width:255px;padding-left:2.8px;box-sizing:border-box;top:691px;height:21px;line-height:21px;font-size:15.2px;color:#000;letter-spacing:0.132px;">ay24sem1hmisstudent38@stu.edu.sg</div>
<div class="cell" style="left:638px;width:146px;padding-left:2.8px;box-sizing:border-box;top:691px;height:21px;line-height:21px;font-size:15.2px;color:#000;letter-spacing:0.492px;">Draft</div>
<div class="cell" style="left:785px;width:146px;padding-left:2.8px;box-sizing:border-box;top:691px;height:21px;line-height:21px;font-size:15.2px;color:#000;letter-spacing:0.194px;">-</div>
<div class="cell" style="left:932px;width:146px;padding-left:2.8px;box-sizing:border-box;top:691px;height:21px;line-height:21px;font-size:15.2px;color:#000;letter-spacing:0.194px;">-</div>
<div class="cell" style="left:1079px;width:146px;padding-left:2.8px;box-sizing:border-box;top:691px;height:21px;line-height:21px;font-size:15.2px;color:#000;letter-spacing:0.194px;">-</div>
<div class="cell" style="left:1226px;width:146px;padding-left:2.8px;box-sizing:border-box;top:691px;height:21px;line-height:21px;font-size:15.2px;color:#000;letter-spacing:0.194px;">-</div>
<div class="cell" style="left:1373px;width:146px;padding-left:2.8px;box-sizing:border-box;top:691px;height:21px;line-height:21px;font-size:15.2px;color:#000;letter-spacing:0.194px;">-</div>
<div class="cell" style="left:1520px;width:146px;padding-left:2.8px;box-sizing:border-box;top:691px;height:21px;line-height:21px;font-size:15.2px;color:#000;letter-spacing:0.194px;">-</div>
<div class="cell" style="left:1667px;width:146px;padding-left:2.8px;box-sizing:border-box;top:691px;height:21px;line-height:21px;font-size:15.2px;color:#000;letter-spacing:0.194px;">-</div>
<div class="cell" style="left:34px;width:146px;padding-right:1.60px;text-align:right;box-sizing:border-box;top:713px;height:21px;line-height:21px;font-size:15.2px;color:#000;letter-spacing:0.696px;">9418</div>
<div class="cell" style="left:181px;width:200px;top:713px;height:21px;line-height:21px;font-size:15.2px;color:#000;"><span style="position:absolute;left:2.50px;top:0;letter-spacing:-0.231px;">AY24SEM1 </span><span style="position:absolute;left:82.90px;top:0;letter-spacing:-1.372px;">SBA </span><span style="position:absolute;left:113.40px;top:0;letter-spacing:0.429px;">Student </span><span style="position:absolute;left:174.30px;top:0;letter-spacing:-0.404px;">08 </span></div>
<div class="cell" style="left:382px;width:255px;padding-left:2.8px;box-sizing:border-box;top:713px;height:21px;line-height:21px;font-size:15.2px;color:#000;letter-spacing:0.181px;">ay24sem1sbastudent08@stu.edu.sg</div>
<div class="cell" style="left:638px;width:146px;padding-left:2.8px;box-sizing:border-box;top:713px;height:21px;line-height:21px;font-size:15.2px;color:#000;letter-spacing:0.492px;">Draft</div>
<div class="cell" style="left:785px;width:146px;padding-left:2.8px;box-sizing:border-box;top:713px;height:21px;line-height:21px;font-size:15.2px;color:#000;letter-spacing:0.194px;">-</div>
<div class="cell" style="left:932px;width:146px;padding-left:2.8px;box-sizing:border-box;top:713px;height:21px;line-height:21px;font-size:15.2px;color:#000;letter-spacing:0.194px;">-</div>
<div class="cell" style="left:1079px;width:146px;padding-left:2.8px;box-sizing:border-box;top:713px;height:21px;line-height:21px;font-size:15.2px;color:#000;letter-spacing:0.194px;">-</div>
<div class="cell" style="left:1226px;width:146px;padding-left:2.8px;box-sizing:border-box;top:713px;height:21px;line-height:21px;font-size:15.2px;color:#000;letter-spacing:0.194px;">-</div>
<div class="cell" style="left:1373px;width:146px;padding-left:2.8px;box-sizing:border-box;top:713px;height:21px;line-height:21px;font-size:15.2px;color:#000;letter-spacing:0.194px;">-</div>
<div class="cell" style="left:1520px;width:146px;padding-left:2.8px;box-sizing:border-box;top:713px;height:21px;line-height:21px;font-size:15.2px;color:#000;letter-spacing:0.194px;">-</div>
<div class="cell" style="left:1667px;width:146px;padding-left:2.8px;box-sizing:border-box;top:713px;height:21px;line-height:21px;font-size:15.2px;color:#000;letter-spacing:0.194px;">-</div>
<div class="cell" style="left:34px;width:146px;padding-right:1.60px;text-align:right;box-sizing:border-box;top:735px;height:21px;line-height:21px;font-size:15.2px;color:#000;letter-spacing:0.696px;">9424</div>
<div class="cell" style="left:181px;width:200px;top:735px;height:21px;line-height:21px;font-size:15.2px;color:#000;"><span style="position:absolute;left:2.50px;top:0;letter-spacing:-0.231px;">AY24SEM1 </span><span style="position:absolute;left:82.90px;top:0;letter-spacing:-1.372px;">SBA </span><span style="position:absolute;left:113.40px;top:0;letter-spacing:0.429px;">Student </span><span style="position:absolute;left:174.30px;top:0;letter-spacing:-0.404px;">01 </span></div>
<div class="cell" style="left:382px;width:255px;padding-left:2.8px;box-sizing:border-box;top:735px;height:21px;line-height:21px;font-size:15.2px;color:#000;letter-spacing:0.181px;">ay24sem1sbastudent01@stu.edu.sg</div>
<div class="cell" style="left:638px;width:146px;padding-left:2.8px;box-sizing:border-box;top:735px;height:21px;line-height:21px;font-size:15.2px;color:#000;letter-spacing:0.492px;">Draft</div>
<div class="cell" style="left:785px;width:146px;padding-left:2.8px;box-sizing:border-box;top:735px;height:21px;line-height:21px;font-size:15.2px;color:#000;letter-spacing:0.194px;">-</div>
<div class="cell" style="left:932px;width:146px;padding-left:2.8px;box-sizing:border-box;top:735px;height:21px;line-height:21px;font-size:15.2px;color:#000;letter-spacing:0.194px;">-</div>
<div class="cell" style="left:1079px;width:146px;padding-left:2.8px;box-sizing:border-box;top:735px;height:21px;line-height:21px;font-size:15.2px;color:#000;letter-spacing:0.194px;">-</div>
<div class="cell" style="left:1226px;width:146px;padding-left:2.8px;box-sizing:border-box;top:735px;height:21px;line-height:21px;font-size:15.2px;color:#000;letter-spacing:0.194px;">-</div>
<div class="cell" style="left:1373px;width:146px;padding-left:2.8px;box-sizing:border-box;top:735px;height:21px;line-height:21px;font-size:15.2px;color:#000;letter-spacing:0.194px;">-</div>
<div class="cell" style="left:1520px;width:146px;padding-left:2.8px;box-sizing:border-box;top:735px;height:21px;line-height:21px;font-size:15.2px;color:#000;letter-spacing:0.194px;">-</div>
<div class="cell" style="left:1667px;width:146px;padding-left:2.8px;box-sizing:border-box;top:735px;height:21px;line-height:21px;font-size:15.2px;color:#000;letter-spacing:0.194px;">-</div>
<div class="cell" style="left:34px;width:146px;padding-right:1.60px;text-align:right;box-sizing:border-box;top:757px;height:21px;line-height:21px;font-size:15.2px;color:#000;letter-spacing:0.696px;">9428</div>
<div class="cell" style="left:181px;width:200px;top:757px;height:21px;line-height:21px;font-size:15.2px;color:#000;"><span style="position:absolute;left:2.50px;top:0;letter-spacing:-0.231px;">AY24SEM1 </span><span style="position:absolute;left:82.30px;top:0;letter-spacing:-1.149px;">SIT </span><span style="position:absolute;left:106.50px;top:0;letter-spacing:0.400px;">Student </span><span style="position:absolute;left:169.70px;top:0;letter-spacing:0.446px;">32 </span></div>
<div class="cell" style="left:382px;width:255px;padding-left:2.8px;box-sizing:border-box;top:757px;height:21px;line-height:21px;font-size:15.2px;color:#000;letter-spacing:0.327px;">ay24sem1sitstudent32@stu.edu.sg</div>
<div class="cell" style="left:638px;width:146px;padding-left:2.8px;box-sizing:border-box;top:757px;height:21px;line-height:21px;font-size:15.2px;color:#000;letter-spacing:0.492px;">Draft</div>
<div class="cell" style="left:785px;width:146px;padding-left:2.8px;box-sizing:border-box;top:757px;height:21px;line-height:21px;font-size:15.2px;color:#000;letter-spacing:0.194px;">-</div>
<div class="cell" style="left:932px;width:146px;padding-left:2.8px;box-sizing:border-box;top:757px;height:21px;line-height:21px;font-size:15.2px;color:#000;letter-spacing:0.194px;">-</div>
<div class="cell" style="left:1079px;width:146px;padding-left:2.8px;box-sizing:border-box;top:757px;height:21px;line-height:21px;font-size:15.2px;color:#000;letter-spacing:0.194px;">-</div>
<div class="cell" style="left:1226px;width:146px;padding-left:2.8px;box-sizing:border-box;top:757px;height:21px;line-height:21px;font-size:15.2px;color:#000;letter-spacing:0.194px;">-</div>
<div class="cell" style="left:1373px;width:146px;padding-left:2.8px;box-sizing:border-box;top:757px;height:21px;line-height:21px;font-size:15.2px;color:#000;letter-spacing:0.194px;">-</div>
<div class="cell" style="left:1520px;width:146px;padding-left:2.8px;box-sizing:border-box;top:757px;height:21px;line-height:21px;font-size:15.2px;color:#000;letter-spacing:0.194px;">-</div>
<div class="cell" style="left:1667px;width:146px;padding-left:2.8px;box-sizing:border-box;top:757px;height:21px;line-height:21px;font-size:15.2px;color:#000;letter-spacing:0.194px;">-</div>
<div class="cell" style="left:34px;width:146px;padding-right:1.60px;text-align:right;box-sizing:border-box;top:779px;height:21px;line-height:21px;font-size:15.2px;color:#000;letter-spacing:0.696px;">9434</div>
<div class="cell" style="left:181px;width:200px;top:779px;height:21px;line-height:21px;font-size:15.2px;color:#000;"><span style="position:absolute;left:2.50px;top:0;letter-spacing:-0.231px;">AY24SEM1 </span><span style="position:absolute;left:82.30px;top:0;letter-spacing:-1.149px;">SIT </span><span style="position:absolute;left:106.50px;top:0;letter-spacing:0.400px;">Student </span><span style="position:absolute;left:169.70px;top:0;letter-spacing:0.446px;">26 </span></div>
<div class="cell" style="left:382px;width:255px;padding-left:2.8px;box-sizing:border-box;top:779px;height:21px;line-height:21px;font-size:15.2px;color:#000;letter-spacing:0.327px;">ay24sem1sitstudent26@stu.edu.sg</div>
<div class="cell" style="left:638px;width:146px;padding-left:2.8px;box-sizing:border-box;top:779px;height:21px;line-height:21px;font-size:15.2px;color:#000;letter-spacing:0.492px;">Draft</div>
<div class="cell" style="left:785px;width:146px;padding-left:2.8px;box-sizing:border-box;top:779px;height:21px;line-height:21px;font-size:15.2px;color:#000;letter-spacing:0.194px;">-</div>
<div class="cell" style="left:932px;width:146px;padding-left:2.8px;box-sizing:border-box;top:779px;height:21px;line-height:21px;font-size:15.2px;color:#000;letter-spacing:0.194px;">-</div>
<div class="cell" style="left:1079px;width:146px;padding-left:2.8px;box-sizing:border-box;top:779px;height:21px;line-height:21px;font-size:15.2px;color:#000;letter-spacing:0.194px;">-</div>
<div class="cell" style="left:1226px;width:146px;padding-left:2.8px;box-sizing:border-box;top:779px;height:21px;line-height:21px;font-size:15.2px;color:#000;letter-spacing:0.194px;">-</div>
<div class="cell" style="left:1373px;width:146px;padding-left:2.8px;box-sizing:border-box;top:779px;height:21px;line-height:21px;font-size:15.2px;color:#000;letter-spacing:0.194px;">-</div>
<div class="cell" style="left:1520px;width:146px;padding-left:2.8px;box-sizing:border-box;top:779px;height:21px;line-height:21px;font-size:15.2px;color:#000;letter-spacing:0.194px;">-</div>
<div class="cell" style="left:1667px;width:146px;padding-left:2.8px;box-sizing:border-box;top:779px;height:21px;line-height:21px;font-size:15.2px;color:#000;letter-spacing:0.194px;">-</div>
<div class="cell" style="left:34px;width:146px;padding-right:1.60px;text-align:right;box-sizing:border-box;top:801px;height:21px;line-height:21px;font-size:15.2px;color:#000;letter-spacing:0.696px;">9414</div>
<div class="cell" style="left:181px;width:200px;top:801px;height:21px;line-height:21px;font-size:15.2px;color:#000;"><span style="position:absolute;left:2.50px;top:0;letter-spacing:-0.231px;">AY24SEM1 </span><span style="position:absolute;left:83.30px;top:0;letter-spacing:-0.150px;">HMIS </span><span style="position:absolute;left:124.20px;top:0;letter-spacing:0.429px;">Student </span><span style="position:absolute;left:184.10px;top:0;letter-spacing:0.446px;">33 </span></div>
<div class="cell" style="left:382px;width:255px;padding-left:2.8px;box-sizing:border-box;top:801px;height:21px;line-height:21px;font-size:15.2px;color:#000;letter-spacing:0.132px;">ay24sem1hmisstudent33@stu.edu.sg</div>
<div class="cell" style="left:638px;width:146px;padding-left:2.8px;box-sizing:border-box;top:801px;height:21px;line-height:21px;font-size:15.2px;color:#000;letter-spacing:0.492px;">Draft</div>
<div class="cell" style="left:785px;width:146px;padding-left:2.8px;box-sizing:border-box;top:801px;height:21px;line-height:21px;font-size:15.2px;color:#000;letter-spacing:0.194px;">-</div>
<div class="cell" style="left:932px;width:146px;padding-left:2.8px;box-sizing:border-box;top:801px;height:21px;line-height:21px;font-size:15.2px;color:#000;letter-spacing:0.194px;">-</div>
<div class="cell" style="left:1079px;width:146px;padding-left:2.8px;box-sizing:border-box;top:801px;height:21px;line-height:21px;font-size:15.2px;color:#000;letter-spacing:0.194px;">-</div>
<div class="cell" style="left:1226px;width:146px;padding-left:2.8px;box-sizing:border-box;top:801px;height:21px;line-height:21px;font-size:15.2px;color:#000;letter-spacing:0.194px;">-</div>
<div class="cell" style="left:1373px;width:146px;padding-left:2.8px;box-sizing:border-box;top:801px;height:21px;line-height:21px;font-size:15.2px;color:#000;letter-spacing:0.194px;">-</div>
<div class="cell" style="left:1520px;width:146px;padding-left:2.8px;box-sizing:border-box;top:801px;height:21px;line-height:21px;font-size:15.2px;color:#000;letter-spacing:0.194px;">-</div>
<div class="cell" style="left:1667px;width:146px;padding-left:2.8px;box-sizing:border-box;top:801px;height:21px;line-height:21px;font-size:15.2px;color:#000;letter-spacing:0.194px;">-</div>
<div class="cell" style="left:34px;width:146px;padding-right:1.60px;text-align:right;box-sizing:border-box;top:823px;height:21px;line-height:21px;font-size:15.2px;color:#000;letter-spacing:0.696px;">9436</div>
<div class="cell" style="left:181px;width:200px;top:823px;height:21px;line-height:21px;font-size:15.2px;color:#000;"><span style="position:absolute;left:2.50px;top:0;letter-spacing:-0.231px;">AY24SEM1 </span><span style="position:absolute;left:82.30px;top:0;letter-spacing:-1.149px;">SIT </span><span style="position:absolute;left:106.50px;top:0;letter-spacing:0.400px;">Student </span><span style="position:absolute;left:169.70px;top:0;letter-spacing:0.446px;">24 </span></div>
<div class="cell" style="left:382px;width:255px;padding-left:2.8px;box-sizing:border-box;top:823px;height:21px;line-height:21px;font-size:15.2px;color:#000;letter-spacing:0.327px;">ay24sem1sitstudent24@stu.edu.sg</div>
<div class="cell" style="left:638px;width:146px;padding-left:2.8px;box-sizing:border-box;top:823px;height:21px;line-height:21px;font-size:15.2px;color:#000;letter-spacing:0.492px;">Draft</div>
<div class="cell" style="left:785px;width:146px;padding-left:2.8px;box-sizing:border-box;top:823px;height:21px;line-height:21px;font-size:15.2px;color:#000;letter-spacing:0.194px;">-</div>
<div class="cell" style="left:932px;width:146px;padding-left:2.8px;box-sizing:border-box;top:823px;height:21px;line-height:21px;font-size:15.2px;color:#000;letter-spacing:0.194px;">-</div>
<div class="cell" style="left:1079px;width:146px;padding-left:2.8px;box-sizing:border-box;top:823px;height:21px;line-height:21px;font-size:15.2px;color:#000;letter-spacing:0.194px;">-</div>
<div class="cell" style="left:1226px;width:146px;padding-left:2.8px;box-sizing:border-box;top:823px;height:21px;line-height:21px;font-size:15.2px;color:#000;letter-spacing:0.194px;">-</div>
<div class="cell" style="left:1373px;width:146px;padding-left:2.8px;box-sizing:border-box;top:823px;height:21px;line-height:21px;font-size:15.2px;color:#000;letter-spacing:0.194px;">-</div>
<div class="cell" style="left:1520px;width:146px;padding-left:2.8px;box-sizing:border-box;top:823px;height:21px;line-height:21px;font-size:15.2px;color:#000;letter-spacing:0.194px;">-</div>
<div class="cell" style="left:1667px;width:146px;padding-left:2.8px;box-sizing:border-box;top:823px;height:21px;line-height:21px;font-size:15.2px;color:#000;letter-spacing:0.194px;">-</div>
<div class="cell" style="left:34px;width:146px;padding-right:1.60px;text-align:right;box-sizing:border-box;top:845px;height:21px;line-height:21px;font-size:15.2px;color:#000;letter-spacing:0.696px;">9411</div>
<div class="cell" style="left:181px;width:200px;top:845px;height:21px;line-height:21px;font-size:15.2px;color:#000;"><span style="position:absolute;left:2.50px;top:0;letter-spacing:-0.231px;">AY24SEM1 </span><span style="position:absolute;left:83.30px;top:0;letter-spacing:-0.150px;">HMIS </span><span style="position:absolute;left:124.20px;top:0;letter-spacing:0.429px;">Student </span><span style="position:absolute;left:184.10px;top:0;letter-spacing:0.446px;">39 </span></div>
<div class="cell" style="left:382px;width:255px;padding-left:2.8px;box-sizing:border-box;top:845px;height:21px;line-height:21px;font-size:15.2px;color:#000;letter-spacing:0.132px;">ay24sem1hmisstudent39@stu.edu.sg</div>
<div class="cell" style="left:638px;width:146px;padding-left:2.8px;box-sizing:border-box;top:845px;height:21px;line-height:21px;font-size:15.2px;color:#000;letter-spacing:0.492px;">Draft</div>
<div class="cell" style="left:785px;width:146px;padding-left:2.8px;box-sizing:border-box;top:845px;height:21px;line-height:21px;font-size:15.2px;color:#000;letter-spacing:0.194px;">-</div>
<div class="cell" style="left:932px;width:146px;padding-left:2.8px;box-sizing:border-box;top:845px;height:21px;line-height:21px;font-size:15.2px;color:#000;letter-spacing:0.194px;">-</div>
<div class="cell" style="left:1079px;width:146px;padding-left:2.8px;box-sizing:border-box;top:845px;height:21px;line-height:21px;font-size:15.2px;color:#000;letter-spacing:0.194px;">-</div>
<div class="cell" style="left:1226px;width:146px;padding-left:2.8px;box-sizing:border-box;top:845px;height:21px;line-height:21px;font-size:15.2px;color:#000;letter-spacing:0.194px;">-</div>
<div class="cell" style="left:1373px;width:146px;padding-left:2.8px;box-sizing:border-box;top:845px;height:21px;line-height:21px;font-size:15.2px;color:#000;letter-spacing:0.194px;">-</div>
<div class="cell" style="left:1520px;width:146px;padding-left:2.8px;box-sizing:border-box;top:845px;height:21px;line-height:21px;font-size:15.2px;color:#000;letter-spacing:0.194px;">-</div>
<div class="cell" style="left:1667px;width:146px;padding-left:2.8px;box-sizing:border-box;top:845px;height:21px;line-height:21px;font-size:15.2px;color:#000;letter-spacing:0.194px;">-</div>
<div class="cell" style="left:34px;width:146px;padding-right:1.60px;text-align:right;box-sizing:border-box;top:867px;height:21px;line-height:21px;font-size:15.2px;color:#000;letter-spacing:0.696px;">9416</div>
<div class="cell" style="left:181px;width:200px;top:867px;height:21px;line-height:21px;font-size:15.2px;color:#000;"><span style="position:absolute;left:2.50px;top:0;letter-spacing:-0.231px;">AY24SEM1 </span><span style="position:absolute;left:82.90px;top:0;letter-spacing:-1.372px;">SBA </span><span style="position:absolute;left:113.40px;top:0;letter-spacing:0.429px;">Student </span><span style="position:absolute;left:174.30px;top:0;letter-spacing:-0.404px;">06 </span></div>
<div class="cell" style="left:382px;width:255px;padding-left:2.8px;box-sizing:border-box;top:867px;height:21px;line-height:21px;font-size:15.2px;color:#000;letter-spacing:0.181px;">ay24sem1sbastudent06@stu.edu.sg</div>
<div class="cell" style="left:638px;width:146px;padding-left:2.8px;box-sizing:border-box;top:867px;height:21px;line-height:21px;font-size:15.2px;color:#000;letter-spacing:0.492px;">Draft</div>
<div class="cell" style="left:785px;width:146px;padding-left:2.8px;box-sizing:border-box;top:867px;height:21px;line-height:21px;font-size:15.2px;color:#000;letter-spacing:0.194px;">-</div>
<div class="cell" style="left:932px;width:146px;padding-left:2.8px;box-sizing:border-box;top:867px;height:21px;line-height:21px;font-size:15.2px;color:#000;letter-spacing:0.194px;">-</div>
<div class="cell" style="left:1079px;width:146px;padding-left:2.8px;box-sizing:border-box;top:867px;height:21px;line-height:21px;font-size:15.2px;color:#000;letter-spacing:0.194px;">-</div>
<div class="cell" style="left:1226px;width:146px;padding-left:2.8px;box-sizing:border-box;top:867px;height:21px;line-height:21px;font-size:15.2px;color:#000;letter-spacing:0.194px;">-</div>
<div class="cell" style="left:1373px;width:146px;padding-left:2.8px;box-sizing:border-box;top:867px;height:21px;line-height:21px;font-size:15.2px;color:#000;letter-spacing:0.194px;">-</div>
<div class="cell" style="left:1520px;width:146px;padding-left:2.8px;box-sizing:border-box;top:867px;height:21px;line-height:21px;font-size:15.2px;color:#000;letter-spacing:0.194px;">-</div>
<div class="cell" style="left:1667px;width:146px;padding-left:2.8px;box-sizing:border-box;top:867px;height:21px;line-height:21px;font-size:15.2px;color:#000;letter-spacing:0.194px;">-</div>
<div class="cell" style="left:34px;width:146px;padding-right:1.60px;text-align:right;box-sizing:border-box;top:889px;height:21px;line-height:21px;font-size:15.2px;color:#000;letter-spacing:0.696px;">9430</div>
<div class="cell" style="left:181px;width:200px;top:889px;height:21px;line-height:21px;font-size:15.2px;color:#000;"><span style="position:absolute;left:2.50px;top:0;letter-spacing:-0.231px;">AY24SEM1 </span><span style="position:absolute;left:82.30px;top:0;letter-spacing:-1.149px;">SIT </span><span style="position:absolute;left:106.50px;top:0;letter-spacing:0.400px;">Student </span><span style="position:absolute;left:169.70px;top:0;letter-spacing:0.446px;">30 </span></div>
<div class="cell" style="left:382px;width:255px;padding-left:2.8px;box-sizing:border-box;top:889px;height:21px;line-height:21px;font-size:15.2px;color:#000;letter-spacing:0.327px;">ay24sem1sitstudent30@stu.edu.sg</div>
<div class="cell" style="left:638px;width:146px;padding-left:2.8px;box-sizing:border-box;top:889px;height:21px;line-height:21px;font-size:15.2px;color:#000;letter-spacing:0.492px;">Draft</div>
<div class="cell" style="left:785px;width:146px;padding-left:2.8px;box-sizing:border-box;top:889px;height:21px;line-height:21px;font-size:15.2px;color:#000;letter-spacing:0.194px;">-</div>
<div class="cell" style="left:932px;width:146px;padding-left:2.8px;box-sizing:border-box;top:889px;height:21px;line-height:21px;font-size:15.2px;color:#000;letter-spacing:0.194px;">-</div>
<div class="cell" style="left:1079px;width:146px;padding-left:2.8px;box-sizing:border-box;top:889px;height:21px;line-height:21px;font-size:15.2px;color:#000;letter-spacing:0.194px;">-</div>
<div class="cell" style="left:1226px;width:146px;padding-left:2.8px;box-sizing:border-box;top:889px;height:21px;line-height:21px;font-size:15.2px;color:#000;letter-spacing:0.194px;">-</div>
<div class="cell" style="left:1373px;width:146px;padding-left:2.8px;box-sizing:border-box;top:889px;height:21px;line-height:21px;font-size:15.2px;color:#000;letter-spacing:0.194px;">-</div>
<div class="cell" style="left:1520px;width:146px;padding-left:2.8px;box-sizing:border-box;top:889px;height:21px;line-height:21px;font-size:15.2px;color:#000;letter-spacing:0.194px;">-</div>
<div class="cell" style="left:1667px;width:146px;padding-left:2.8px;box-sizing:border-box;top:889px;height:21px;line-height:21px;font-size:15.2px;color:#000;letter-spacing:0.194px;">-</div>
<div class="cell" style="left:34px;width:146px;padding-right:1.60px;text-align:right;box-sizing:border-box;top:911px;height:21px;line-height:21px;font-size:15.2px;color:#000;letter-spacing:0.696px;">9403</div>
<div class="cell" style="left:181px;width:200px;top:911px;height:21px;line-height:21px;font-size:15.2px;color:#000;"><span style="position:absolute;left:2.50px;top:0;letter-spacing:-0.231px;">AY24SEM1 </span><span style="position:absolute;left:83.30px;top:0;letter-spacing:-0.150px;">HMIS </span><span style="position:absolute;left:124.20px;top:0;letter-spacing:0.429px;">Student </span><span style="position:absolute;left:184.10px;top:0;letter-spacing:0.446px;">46 </span></div>
<div class="cell" style="left:382px;width:255px;padding-left:2.8px;box-sizing:border-box;top:911px;height:21px;line-height:21px;font-size:15.2px;color:#000;letter-spacing:0.132px;">ay24sem1hmisstudent46@stu.edu.sg</div>
<div class="cell" style="left:638px;width:146px;padding-left:2.8px;box-sizing:border-box;top:911px;height:21px;line-height:21px;font-size:15.2px;color:#000;letter-spacing:0.492px;">Draft</div>
<div class="cell" style="left:785px;width:146px;padding-left:2.8px;box-sizing:border-box;top:911px;height:21px;line-height:21px;font-size:15.2px;color:#000;letter-spacing:0.194px;">-</div>
<div class="cell" style="left:932px;width:146px;padding-left:2.8px;box-sizing:border-box;top:911px;height:21px;line-height:21px;font-size:15.2px;color:#000;letter-spacing:0.194px;">-</div>
<div class="cell" style="left:1079px;width:146px;padding-left:2.8px;box-sizing:border-box;top:911px;height:21px;line-height:21px;font-size:15.2px;color:#000;letter-spacing:0.194px;">-</div>
<div class="cell" style="left:1226px;width:146px;padding-left:2.8px;box-sizing:border-box;top:911px;height:21px;line-height:21px;font-size:15.2px;color:#000;letter-spacing:0.194px;">-</div>
<div class="cell" style="left:1373px;width:146px;padding-left:2.8px;box-sizing:border-box;top:911px;height:21px;line-height:21px;font-size:15.2px;color:#000;letter-spacing:0.194px;">-</div>
<div class="cell" style="left:1520px;width:146px;padding-left:2.8px;box-sizing:border-box;top:911px;height:21px;line-height:21px;font-size:15.2px;color:#000;letter-spacing:0.194px;">-</div>
<div class="cell" style="left:1667px;width:146px;padding-left:2.8px;box-sizing:border-box;top:911px;height:21px;line-height:21px;font-size:15.2px;color:#000;letter-spacing:0.194px;">-</div>
<div class="cell" style="left:34px;width:146px;padding-right:1.60px;text-align:right;box-sizing:border-box;top:933px;height:21px;line-height:21px;font-size:15.2px;color:#000;letter-spacing:0.696px;">9404</div>
<div class="cell" style="left:181px;width:200px;top:933px;height:21px;line-height:21px;font-size:15.2px;color:#000;"><span style="position:absolute;left:2.50px;top:0;letter-spacing:-0.231px;">AY24SEM1 </span><span style="position:absolute;left:83.30px;top:0;letter-spacing:-0.150px;">HMIS </span><span style="position:absolute;left:124.20px;top:0;letter-spacing:0.429px;">Student </span><span style="position:absolute;left:184.10px;top:0;letter-spacing:0.446px;">47 </span></div>
<div class="cell" style="left:382px;width:255px;padding-left:2.8px;box-sizing:border-box;top:933px;height:21px;line-height:21px;font-size:15.2px;color:#000;letter-spacing:0.132px;">ay24sem1hmisstudent47@stu.edu.sg</div>
<div class="cell" style="left:638px;width:146px;padding-left:2.8px;box-sizing:border-box;top:933px;height:21px;line-height:21px;font-size:15.2px;color:#000;letter-spacing:0.492px;">Draft</div>
<div class="cell" style="left:785px;width:146px;padding-left:2.8px;box-sizing:border-box;top:933px;height:21px;line-height:21px;font-size:15.2px;color:#000;letter-spacing:0.194px;">-</div>
<div class="cell" style="left:932px;width:146px;padding-left:2.8px;box-sizing:border-box;top:933px;height:21px;line-height:21px;font-size:15.2px;color:#000;letter-spacing:0.194px;">-</div>
<div class="cell" style="left:1079px;width:146px;padding-left:2.8px;box-sizing:border-box;top:933px;height:21px;line-height:21px;font-size:15.2px;color:#000;letter-spacing:0.194px;">-</div>
<div class="cell" style="left:1226px;width:146px;padding-left:2.8px;box-sizing:border-box;top:933px;height:21px;line-height:21px;font-size:15.2px;color:#000;letter-spacing:0.194px;">-</div>
<div class="cell" style="left:1373px;width:146px;padding-left:2.8px;box-sizing:border-box;top:933px;height:21px;line-height:21px;font-size:15.2px;color:#000;letter-spacing:0.194px;">-</div>
<div class="cell" style="left:1520px;width:146px;padding-left:2.8px;box-sizing:border-box;top:933px;height:21px;line-height:21px;font-size:15.2px;color:#000;letter-spacing:0.194px;">-</div>
<div class="cell" style="left:1667px;width:146px;padding-left:2.8px;box-sizing:border-box;top:933px;height:21px;line-height:21px;font-size:15.2px;color:#000;letter-spacing:0.194px;">-</div>
<div style="position:absolute;left:32px;top:380px;width:150px;height:25px;border:2px solid #107c41;box-sizing:border-box;"></div>
<div style="position:absolute;left:177px;top:400px;width:7px;height:7px;background:#107c41;border:1px solid #fff;box-sizing:border-box;"></div>
<div style="position:absolute;left:141px;top:952px;width:262px;height:36px;background:#fff;border-radius:0 0 7px 7px;box-shadow:0 1px 2px rgba(0,0,0,.12);"></div>
<div style="position:absolute;left:141px;top:952px;width:262px;height:4px;background:#fff;"></div>
<svg style="position:absolute;left:135px;top:954px;" width="6" height="6" viewBox="0 0 6 6"><path d="M0 0 H6 V6 Q6 0 0 0 Z" fill="#fff"/></svg>
<svg style="position:absolute;left:403px;top:954px;" width="6" height="6" viewBox="0 0 6 6"><path d="M6 0 H0 V6 Q0 0 6 0 Z" fill="#fff"/></svg>
<span class="t " style="left:151.10px;top:958px;font-size:17.3px;line-height:24px;color:#1f1f1f;letter-spacing:-0.415px;-webkit-text-stroke:0.4px #1f1f1f;">Users </span>
<span class="t " style="left:198.40px;top:958px;font-size:17.3px;line-height:24px;color:#1f1f1f;letter-spacing:0.820px;-webkit-text-stroke:0.4px #1f1f1f;">information </span>
<span class="t " style="left:297.60px;top:958px;font-size:17.3px;line-height:24px;color:#1f1f1f;letter-spacing:-0.263px;-webkit-text-stroke:0.4px #1f1f1f;">for </span>
<span class="t " style="left:325.00px;top:958px;font-size:17.3px;line-height:24px;color:#1f1f1f;letter-spacing:0.074px;-webkit-text-stroke:0.4px #1f1f1f;">survey </span>
<span class="t " style="left:381.50px;top:958px;font-size:17.3px;line-height:24px;color:#1f1f1f;letter-spacing:0.938px;-webkit-text-stroke:0.4px #1f1f1f;">- </span>
<div style="position:absolute;left:151px;top:983px;width:242px;height:2px;background:#107c41;border-radius:1px;"></div>
</div></body></html>
